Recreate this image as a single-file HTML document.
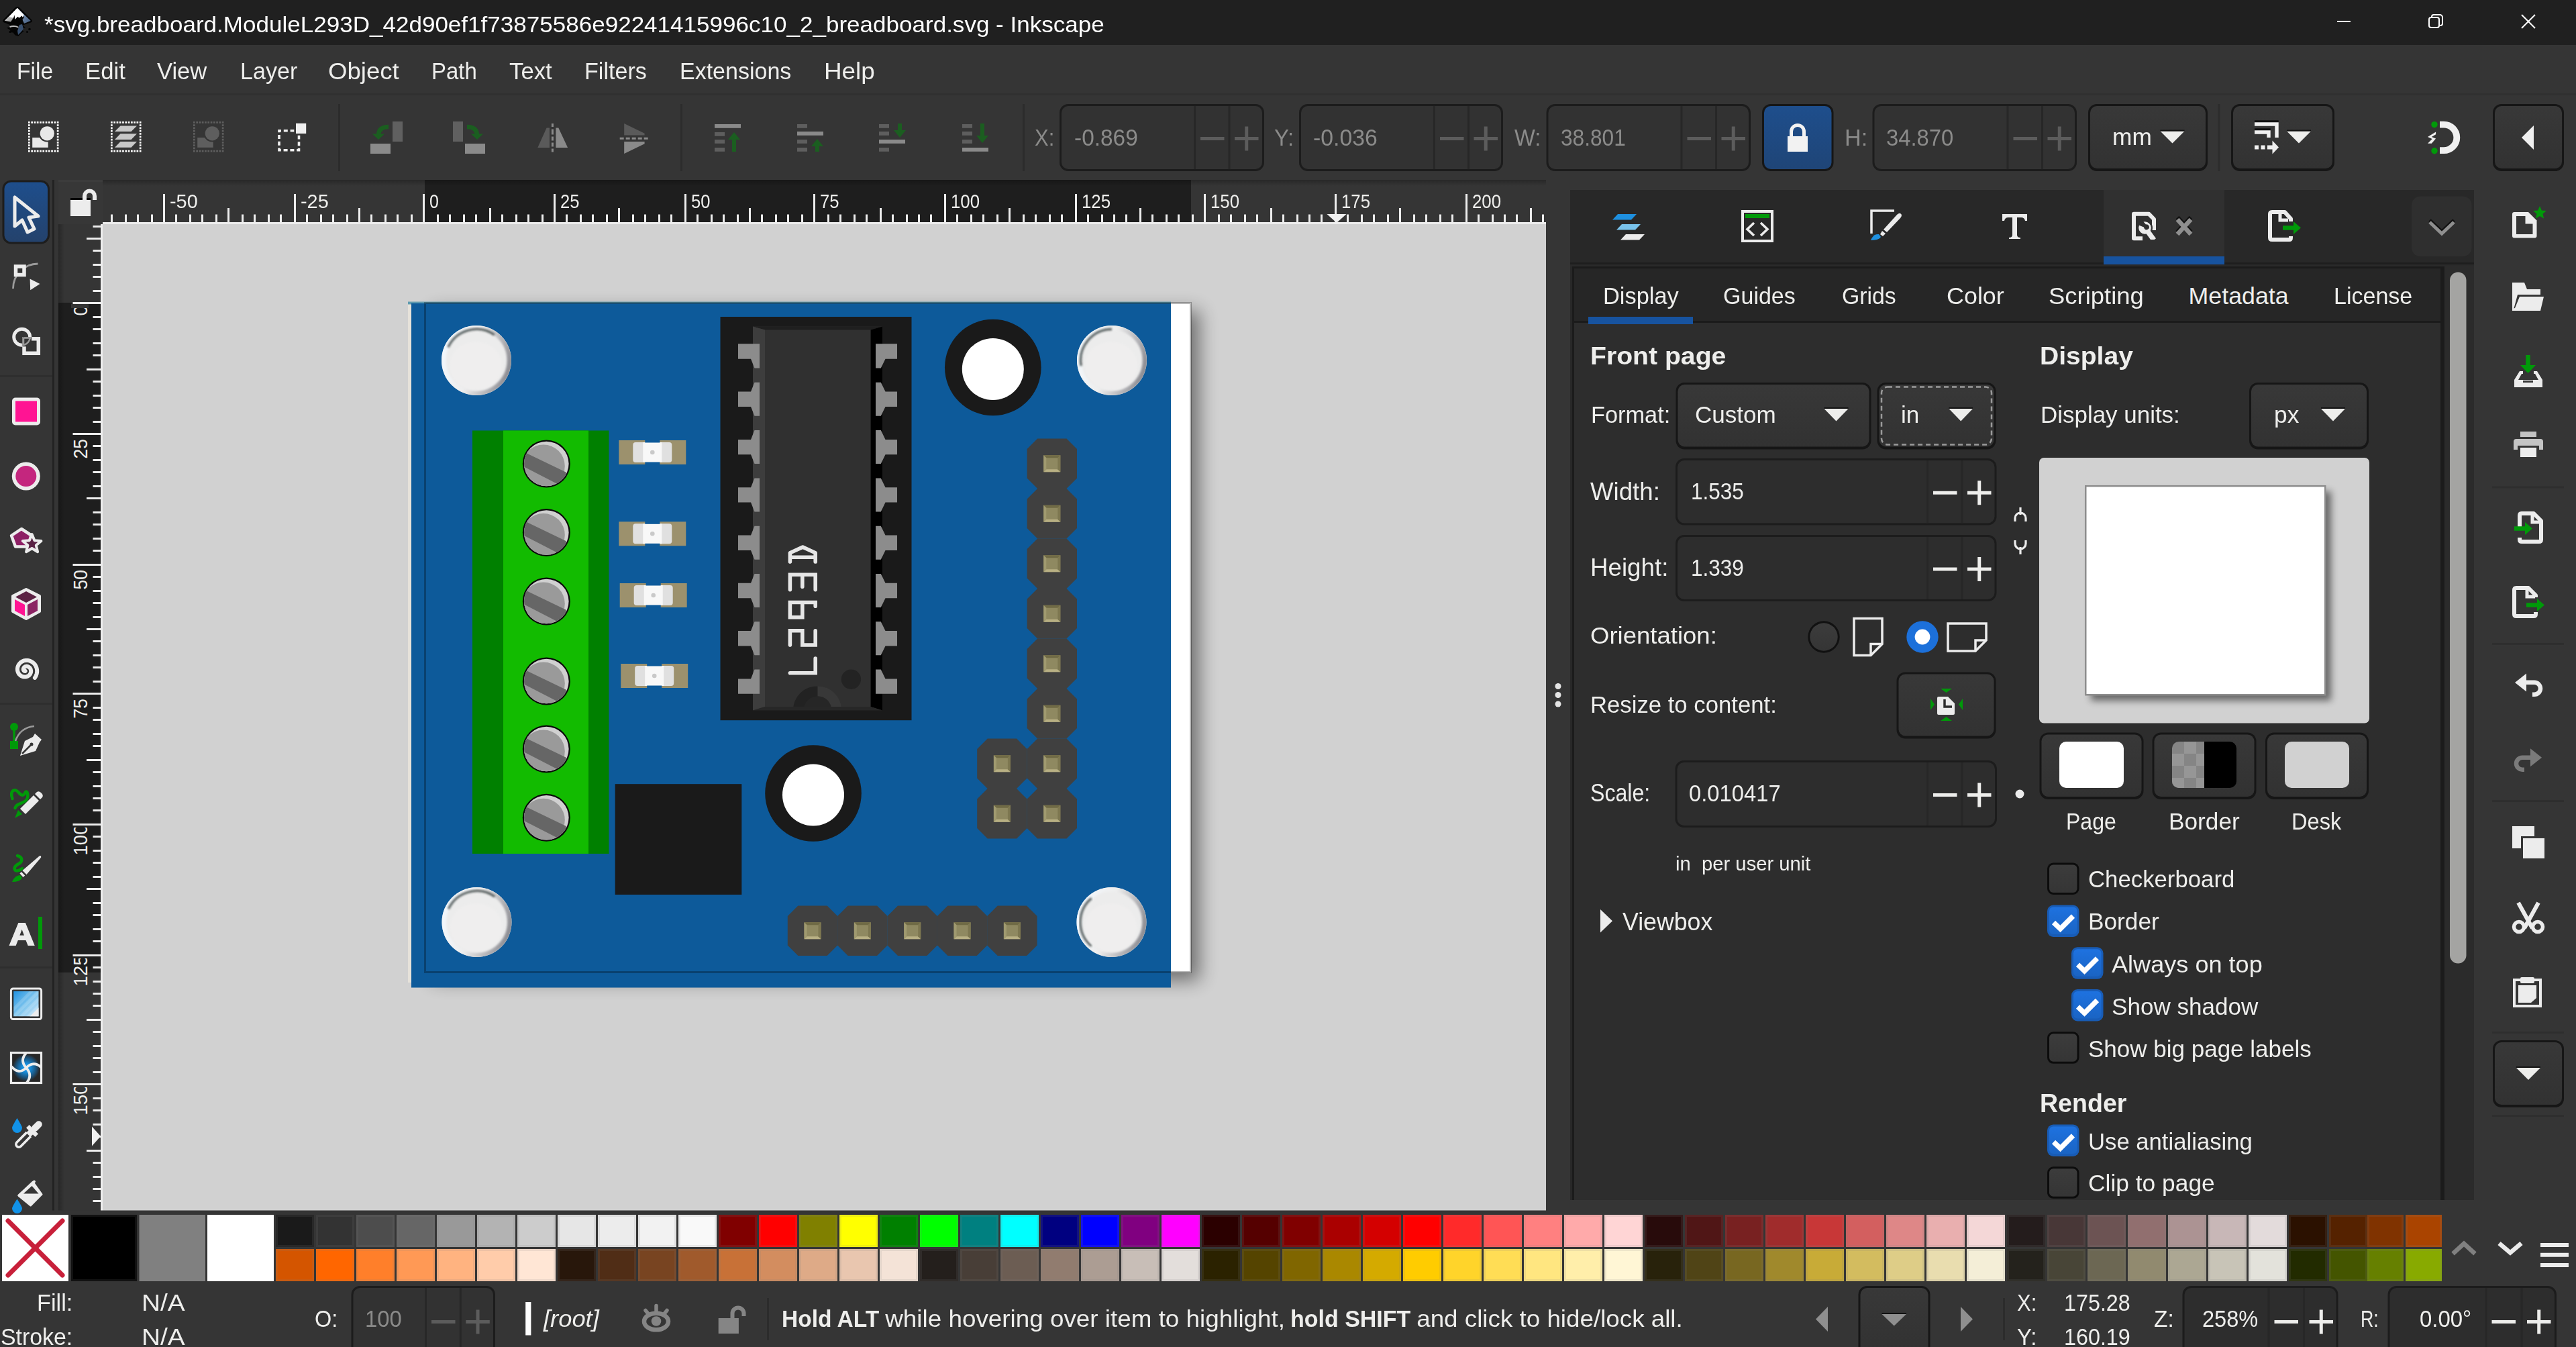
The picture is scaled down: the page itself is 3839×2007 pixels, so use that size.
<!DOCTYPE html>
<html><head><meta charset="utf-8"><title>Inkscape</title>
<style>
html,body{margin:0;padding:0;background:#353535;}
html{width:3839px;height:2007px;overflow:hidden;}
body{width:3839px;height:2007px;overflow:hidden;position:relative;font-family:"Liberation Sans",sans-serif;}
svg{position:absolute;left:0;top:0;}
.t{position:absolute;white-space:pre;display:block;}
</style></head><body>
<svg width="3839" height="2007" viewBox="0 0 3839 2007">
<rect x="0.0" y="0.0" width="3839.0" height="67.0" fill="#202020"/>
<linearGradient id="lgl" x1="0" y1="0" x2="1" y2="1"><stop offset="0" stop-color="#ffffff"/><stop offset="1" stop-color="#7a7a7a"/></linearGradient>
<linearGradient id="lgr" x1="0" y1="0" x2="1" y2="1"><stop offset="0" stop-color="#9fb4d0"/><stop offset="1" stop-color="#3e587c"/></linearGradient>
<path d="M25.8 10 Q27.6 10 29.2 11.6 L47 29.3 Q49.3 32 46 33.6 L33.5 37.8 L38 41 L31 44.3 L35.5 46.5 L30.5 50.5 L27.5 54 L22.5 52.5 L19.5 48.5 L13.5 48 L15.5 45 L10 41.5 L21 39.5 L6 33.6 Q2.8 32 5 29.3 L22.4 11.6 Q24 10 25.8 10 Z" fill="#040404"/>
<path d="M25.8 12 L6.8 30.8 L16 32.6 L20.5 26 L23 16 Z" fill="url(#lgl)"/>
<path d="M25.8 12 L45.8 31 L36 35 L33.5 29.5 L36 25.5 L34 22 Z" fill="url(#lgr)"/>
<path d="M25.8 11.8 L13.5 25 L19.5 26.8 L21.5 22.5 L22.5 29 L26 25 L29 26.5 L32.5 23.5 L34 26 L35.5 22 Z" fill="#ffffff"/>
<path d="M14 39.5 Q21 36.5 28 40 L27 41.5 Q21 39 15 41 Z" fill="#bdbdbd"/>
<path d="M29 37 L33 36 L35 43 L31 48 L27 52 L26 46 Z" fill="#39506f"/>
<circle cx="15" cy="47.5" r="1.6" fill="#040404"/><circle cx="40.5" cy="47.5" r="1.5" fill="#040404"/><circle cx="44" cy="43.5" r="1.8" fill="#040404"/>
<path d="M3483 32 h20" stroke="#fff" stroke-width="2" fill="none"/>
<rect x="3620" y="26" width="15" height="15" rx="3" fill="none" stroke="#fff" stroke-width="2"/>
<path d="M3624 26 v-1 a3 3 0 0 1 3 -3 h9 a4 4 0 0 1 4 4 v9 a3 3 0 0 1 -3 3 h-1" fill="none" stroke="#fff" stroke-width="2"/>
<path d="M3758 22 l20 20 M3778 22 l-20 20" stroke="#fff" stroke-width="2" fill="none"/>
<rect x="0.0" y="67.0" width="3839.0" height="72.0" fill="#353535"/>
<rect x="0.0" y="139.0" width="3839.0" height="3.0" fill="#303030"/>
<path d="M42.0 181 h2.7 v2.7 h-2.7z M42.0 223.8 h2.7 v2.7 h-2.7z M46.3 181 h2.7 v2.7 h-2.7z M46.3 223.8 h2.7 v2.7 h-2.7z M42 185.3 h2.7 v2.7 h-2.7z M84.8 185.3 h2.7 v2.7 h-2.7z M50.6 181 h2.7 v2.7 h-2.7z M50.6 223.8 h2.7 v2.7 h-2.7z M42 189.6 h2.7 v2.7 h-2.7z M84.8 189.6 h2.7 v2.7 h-2.7z M54.8 181 h2.7 v2.7 h-2.7z M54.8 223.8 h2.7 v2.7 h-2.7z M42 193.8 h2.7 v2.7 h-2.7z M84.8 193.8 h2.7 v2.7 h-2.7z M59.1 181 h2.7 v2.7 h-2.7z M59.1 223.8 h2.7 v2.7 h-2.7z M42 198.1 h2.7 v2.7 h-2.7z M84.8 198.1 h2.7 v2.7 h-2.7z M63.4 181 h2.7 v2.7 h-2.7z M63.4 223.8 h2.7 v2.7 h-2.7z M42 202.4 h2.7 v2.7 h-2.7z M84.8 202.4 h2.7 v2.7 h-2.7z M67.7 181 h2.7 v2.7 h-2.7z M67.7 223.8 h2.7 v2.7 h-2.7z M42 206.7 h2.7 v2.7 h-2.7z M84.8 206.7 h2.7 v2.7 h-2.7z M72.0 181 h2.7 v2.7 h-2.7z M72.0 223.8 h2.7 v2.7 h-2.7z M42 211.0 h2.7 v2.7 h-2.7z M84.8 211.0 h2.7 v2.7 h-2.7z M76.2 181 h2.7 v2.7 h-2.7z M76.2 223.8 h2.7 v2.7 h-2.7z M42 215.2 h2.7 v2.7 h-2.7z M84.8 215.2 h2.7 v2.7 h-2.7z M80.5 181 h2.7 v2.7 h-2.7z M80.5 223.8 h2.7 v2.7 h-2.7z M42 219.5 h2.7 v2.7 h-2.7z M84.8 219.5 h2.7 v2.7 h-2.7z M84.8 181 h2.7 v2.7 h-2.7z M84.8 223.8 h2.7 v2.7 h-2.7z" fill="#ffffff"/>
<rect x="48.2" y="205" width="23.5" height="14.8" fill="#e8e8e8"/><circle cx="70.3" cy="198.8" r="12.8" fill="#353535"/><circle cx="70.3" cy="198.8" r="10.6" fill="#e8e8e8"/>
<path d="M165.0 181 h2.7 v2.7 h-2.7z M165.0 223.8 h2.7 v2.7 h-2.7z M169.3 181 h2.7 v2.7 h-2.7z M169.3 223.8 h2.7 v2.7 h-2.7z M165 185.3 h2.7 v2.7 h-2.7z M207.8 185.3 h2.7 v2.7 h-2.7z M173.6 181 h2.7 v2.7 h-2.7z M173.6 223.8 h2.7 v2.7 h-2.7z M165 189.6 h2.7 v2.7 h-2.7z M207.8 189.6 h2.7 v2.7 h-2.7z M177.8 181 h2.7 v2.7 h-2.7z M177.8 223.8 h2.7 v2.7 h-2.7z M165 193.8 h2.7 v2.7 h-2.7z M207.8 193.8 h2.7 v2.7 h-2.7z M182.1 181 h2.7 v2.7 h-2.7z M182.1 223.8 h2.7 v2.7 h-2.7z M165 198.1 h2.7 v2.7 h-2.7z M207.8 198.1 h2.7 v2.7 h-2.7z M186.4 181 h2.7 v2.7 h-2.7z M186.4 223.8 h2.7 v2.7 h-2.7z M165 202.4 h2.7 v2.7 h-2.7z M207.8 202.4 h2.7 v2.7 h-2.7z M190.7 181 h2.7 v2.7 h-2.7z M190.7 223.8 h2.7 v2.7 h-2.7z M165 206.7 h2.7 v2.7 h-2.7z M207.8 206.7 h2.7 v2.7 h-2.7z M195.0 181 h2.7 v2.7 h-2.7z M195.0 223.8 h2.7 v2.7 h-2.7z M165 211.0 h2.7 v2.7 h-2.7z M207.8 211.0 h2.7 v2.7 h-2.7z M199.2 181 h2.7 v2.7 h-2.7z M199.2 223.8 h2.7 v2.7 h-2.7z M165 215.2 h2.7 v2.7 h-2.7z M207.8 215.2 h2.7 v2.7 h-2.7z M203.5 181 h2.7 v2.7 h-2.7z M203.5 223.8 h2.7 v2.7 h-2.7z M165 219.5 h2.7 v2.7 h-2.7z M207.8 219.5 h2.7 v2.7 h-2.7z M207.8 181 h2.7 v2.7 h-2.7z M207.8 223.8 h2.7 v2.7 h-2.7z" fill="#ffffff"/>
<path d="M179.5 187.5 h24.5 l-8.5 8.6 h-24.5 z" fill="#c8c8c8"/>
<path d="M179.5 199.3 h24.5 l-8.5 8.6 h-24.5 z" fill="#c8c8c8"/>
<path d="M179.5 211.1 h24.5 l-8.5 8.6 h-24.5 z" fill="#c8c8c8"/>
<path d="M288.0 181 h2.7 v2.7 h-2.7z M288.0 223.8 h2.7 v2.7 h-2.7z M292.3 181 h2.7 v2.7 h-2.7z M292.3 223.8 h2.7 v2.7 h-2.7z M288 185.3 h2.7 v2.7 h-2.7z M330.8 185.3 h2.7 v2.7 h-2.7z M296.6 181 h2.7 v2.7 h-2.7z M296.6 223.8 h2.7 v2.7 h-2.7z M288 189.6 h2.7 v2.7 h-2.7z M330.8 189.6 h2.7 v2.7 h-2.7z M300.8 181 h2.7 v2.7 h-2.7z M300.8 223.8 h2.7 v2.7 h-2.7z M288 193.8 h2.7 v2.7 h-2.7z M330.8 193.8 h2.7 v2.7 h-2.7z M305.1 181 h2.7 v2.7 h-2.7z M305.1 223.8 h2.7 v2.7 h-2.7z M288 198.1 h2.7 v2.7 h-2.7z M330.8 198.1 h2.7 v2.7 h-2.7z M309.4 181 h2.7 v2.7 h-2.7z M309.4 223.8 h2.7 v2.7 h-2.7z M288 202.4 h2.7 v2.7 h-2.7z M330.8 202.4 h2.7 v2.7 h-2.7z M313.7 181 h2.7 v2.7 h-2.7z M313.7 223.8 h2.7 v2.7 h-2.7z M288 206.7 h2.7 v2.7 h-2.7z M330.8 206.7 h2.7 v2.7 h-2.7z M318.0 181 h2.7 v2.7 h-2.7z M318.0 223.8 h2.7 v2.7 h-2.7z M288 211.0 h2.7 v2.7 h-2.7z M330.8 211.0 h2.7 v2.7 h-2.7z M322.2 181 h2.7 v2.7 h-2.7z M322.2 223.8 h2.7 v2.7 h-2.7z M288 215.2 h2.7 v2.7 h-2.7z M330.8 215.2 h2.7 v2.7 h-2.7z M326.5 181 h2.7 v2.7 h-2.7z M326.5 223.8 h2.7 v2.7 h-2.7z M288 219.5 h2.7 v2.7 h-2.7z M330.8 219.5 h2.7 v2.7 h-2.7z M330.8 181 h2.7 v2.7 h-2.7z M330.8 223.8 h2.7 v2.7 h-2.7z" fill="#5e5e5e"/>
<rect x="294.2" y="205" width="23.5" height="14.8" fill="#5e5e5e"/><circle cx="316.3" cy="198.8" r="12.8" fill="#353535"/><circle cx="316.3" cy="198.8" r="10.6" fill="#5e5e5e"/>
<rect x="416" y="194.8" width="29.5" height="29" fill="none" stroke="#f0f0f0" stroke-width="3.6" stroke-dasharray="6 3.8" stroke-dashoffset="3"/>
<rect x="438.5" y="181.5" width="20" height="20" fill="#353535"/><rect x="441" y="183.8" width="15.2" height="15.2" fill="#f0f0f0"/>
<path d="M505.5 155 V255" stroke="#2c2c2c" stroke-width="3"/>
<rect x="585" y="181" width="15" height="30" fill="#606060"/><rect x="552" y="214" width="30" height="15" fill="#8a8a8a"/>
<path d="M579 189 Q564.5 189 564 201" fill="none" stroke="#1b5e20" stroke-width="6.5"/><path d="M554.9 199.5 h18.2 l-9.1 8.5 z" fill="#1b5e20"/>
<rect x="675" y="181" width="15" height="30" fill="#606060"/><rect x="693" y="214" width="30" height="15" fill="#8a8a8a"/>
<path d="M696 189 Q710.5 189 711 201" fill="none" stroke="#1b5e20" stroke-width="6.5"/><path d="M701.9 199.5 h18.2 l-9.1 8.5 z" fill="#1b5e20"/>
<path d="M801.3 220 H819 V190.4 H814.6 Z" fill="#5a5a5a"/><path d="M828.4 190.4 H832.3 L846.1 220 H828.4 Z" fill="#8a8a8a"/><path d="M823.4 184 V226.5" stroke="#8a8a8a" stroke-width="3" stroke-dasharray="5 3.5 8 3 6 3 6 3 6"/>
<path d="M930.2 184 L960.6 198.7 V201.6 H930.2 Z" fill="#5a5a5a"/><path d="M930.2 211 H960.6 V214.3 L930.2 229 Z" fill="#8a8a8a"/><path d="M923.7 206.2 H966.5" stroke="#8a8a8a" stroke-width="3" stroke-dasharray="6 3"/>
<path d="M1015.5 155 V255" stroke="#2c2c2c" stroke-width="3"/>
<rect x="1065" y="185" width="39" height="5.8" fill="#8a8a8a"/>
<rect x="1065" y="197" width="15" height="5.8" fill="#5e5e5e"/>
<rect x="1065" y="208" width="15" height="5.8" fill="#5e5e5e"/>
<rect x="1065" y="220" width="15" height="5.8" fill="#5e5e5e"/>
<path d="M1094 226 V206" stroke="#1b5e20" stroke-width="6"/><path d="M1085 208 h18 l-9 -11 z" fill="#1b5e20"/>
<rect x="1188" y="185" width="15" height="5.8" fill="#5e5e5e"/>
<rect x="1188" y="196" width="39" height="5.8" fill="#8a8a8a"/>
<rect x="1188" y="208" width="15" height="5.8" fill="#5e5e5e"/>
<rect x="1188" y="220" width="15" height="5.8" fill="#5e5e5e"/>
<path d="M1218 226 V216" stroke="#1b5e20" stroke-width="6"/><path d="M1209 218 h18 l-9 -11 z" fill="#1b5e20"/>
<rect x="1310" y="185" width="15" height="5.8" fill="#5e5e5e"/>
<rect x="1310" y="196" width="15" height="5.8" fill="#5e5e5e"/>
<rect x="1310" y="208" width="39" height="5.8" fill="#8a8a8a"/>
<rect x="1310" y="220" width="15" height="5.8" fill="#5e5e5e"/>
<path d="M1341 184 V196" stroke="#1b5e20" stroke-width="6"/><path d="M1332 194 h18 l-9 11 z" fill="#1b5e20"/>
<rect x="1434" y="185" width="15" height="5.8" fill="#5e5e5e"/>
<rect x="1434" y="196" width="15" height="5.8" fill="#5e5e5e"/>
<rect x="1434" y="208" width="15" height="5.8" fill="#5e5e5e"/>
<rect x="1434" y="220" width="39" height="5.8" fill="#8a8a8a"/>
<path d="M1464 184 V204" stroke="#1b5e20" stroke-width="6"/><path d="M1455 202 h18 l-9 11 z" fill="#1b5e20"/>
<path d="M1525.5 155 V255" stroke="#2c2c2c" stroke-width="3"/>
<rect x="1579.0" y="155.0" width="305.0" height="100.0" fill="#1c1c1c" rx="13"/>
<rect x="1582.0" y="158.0" width="299.0" height="94.0" fill="#323232" rx="10"/>
<path d="M1780.5 158 V252 M1832 158 V252" stroke="#272727" stroke-width="3"/>
<path d="M1789.0 206.5 h35.5" stroke="#5c5c5c" stroke-width="5.0"/>
<path d="M1840 206.5 h35.5 M1857.75 188.5 v36" stroke="#5c5c5c" stroke-width="5.0"/>
<rect x="1936.0" y="155.0" width="304.0" height="100.0" fill="#1c1c1c" rx="13"/>
<rect x="1939.0" y="158.0" width="298.0" height="94.0" fill="#323232" rx="10"/>
<path d="M2137.5 158 V252 M2188.5 158 V252" stroke="#272727" stroke-width="3"/>
<path d="M2146.0 206.5 h35.5" stroke="#5c5c5c" stroke-width="5.0"/>
<path d="M2196.5 206.5 h35.5 M2214.25 188.5 v36" stroke="#5c5c5c" stroke-width="5.0"/>
<rect x="2304.5" y="155.0" width="304.5" height="100.0" fill="#1c1c1c" rx="13"/>
<rect x="2307.5" y="158.0" width="298.5" height="94.0" fill="#323232" rx="10"/>
<path d="M2506 158 V252 M2557.5 158 V252" stroke="#272727" stroke-width="3"/>
<path d="M2514.5 206.5 h35.5" stroke="#5c5c5c" stroke-width="5.0"/>
<path d="M2565.5 206.5 h35.5 M2583.25 188.5 v36" stroke="#5c5c5c" stroke-width="5.0"/>
<linearGradient id="lockg" x1="0" y1="0" x2="0" y2="1"><stop offset="0" stop-color="#1e4e8c"/><stop offset="1" stop-color="#1f4577"/></linearGradient>
<rect x="2626.0" y="155.0" width="106.5" height="100.0" fill="#161616" rx="13"/>
<rect x="2629.0" y="158.0" width="100.5" height="94.0" fill="url(#lockg)" rx="10"/>
<rect x="2664" y="203" width="30" height="23" fill="#f2f2f2"/><path d="M2669.5 204 v-8 a9.5 9.5 0 0 1 19 0 v8" fill="none" stroke="#f2f2f2" stroke-width="5"/>
<rect x="2790.5" y="155.0" width="304.5" height="100.0" fill="#1c1c1c" rx="13"/>
<rect x="2793.5" y="158.0" width="298.5" height="94.0" fill="#323232" rx="10"/>
<path d="M2992 158 V252 M3043.5 158 V252" stroke="#272727" stroke-width="3"/>
<path d="M3000.5 206.5 h35.5" stroke="#5c5c5c" stroke-width="5.0"/>
<path d="M3051.5 206.5 h35.5 M3069.25 188.5 v36" stroke="#5c5c5c" stroke-width="5.0"/>
<linearGradient id="bg3112_155" x1="0" y1="0" x2="0" y2="1"><stop offset="0" stop-color="#383838"/><stop offset="1" stop-color="#323232"/></linearGradient>
<rect x="3112.0" y="155.0" width="178.0" height="100.0" fill="#161616" rx="13"/>
<rect x="3115.0" y="158.0" width="172.0" height="93.0" fill="url(#bg3112_155)" rx="10"/>
<path d="M3219.5 195.5 H3255.5 L3237.5 213.5 Z" fill="#eeeeec"/>
<path d="M3219.5 194.5 H3255.5" stroke="#111" stroke-width="2"/>
<path d="M3307 155 V255" stroke="#2c2c2c" stroke-width="3"/>
<linearGradient id="bg3325_155" x1="0" y1="0" x2="0" y2="1"><stop offset="0" stop-color="#383838"/><stop offset="1" stop-color="#323232"/></linearGradient>
<rect x="3325.0" y="155.0" width="154.0" height="100.0" fill="#161616" rx="13"/>
<rect x="3328.0" y="158.0" width="148.0" height="93.0" fill="url(#bg3325_155)" rx="10"/>
<path d="M3360 182 h33 v23 M3360 194 h21 v11" fill="none" stroke="#111" stroke-width="5.5"/>
<path d="M3360 185 h33 v20 M3360 197 h21 v8" fill="none" stroke="#f0f0f0" stroke-width="5.5"/>
<path d="M3360 219.5 h6 m3.5 0 h6 m3.5 0 h8" stroke="#f0f0f0" stroke-width="6"/><path d="M3386.5 209.5 l9.5 10 l-9.5 10 z" fill="#f0f0f0"/>
<path d="M3408 195.5 H3444 L3426.0 213.5 Z" fill="#eeeeec"/>
<path d="M3408 194.5 H3444" stroke="#111" stroke-width="2"/>
<path d="M3636 185.6 h6 a19.3 19.3 0 0 1 0 38.6 h-6" fill="none" stroke="#f0f0f0" stroke-width="9.8"/>
<circle cx="3628" cy="185.6" r="4.7" fill="#009909"/><circle cx="3628" cy="224.7" r="4.7" fill="#009909"/>
<path d="M3630.1 196.4 L3618 204 L3624.7 206.9 L3618 213.8 H3623.8 L3630.1 206.5 L3623.8 204 L3630.1 200.2 Z" fill="#f0f0f0"/>
<linearGradient id="bg3715_155" x1="0" y1="0" x2="0" y2="1"><stop offset="0" stop-color="#383838"/><stop offset="1" stop-color="#323232"/></linearGradient>
<rect x="3715.0" y="155.0" width="106.0" height="100.0" fill="#161616" rx="13"/>
<rect x="3718.0" y="158.0" width="100.0" height="93.0" fill="url(#bg3715_155)" rx="10"/>
<path d="M3776 187 v36 l-18 -18 z" fill="#f0f0f0"/>
<rect x="153.0" y="334.0" width="2151.0" height="1469.5" fill="#d1d1d1"/>
<rect x="153.0" y="268.0" width="2151.0" height="66.0" fill="#353535"/>
<rect x="633.0" y="268.0" width="1142.0" height="63.0" fill="#1e1e1e"/>
<linearGradient id="rsh" x1="0" y1="0" x2="0" y2="1"><stop offset="0" stop-color="#000" stop-opacity="0.25"/><stop offset="1" stop-color="#000" stop-opacity="0"/></linearGradient>
<rect x="153.0" y="268.0" width="2151.0" height="9.0" fill="url(#rsh)"/>
<rect x="87.0" y="334.0" width="66.0" height="1469.5" fill="#353535"/>
<rect x="87.0" y="451.0" width="63.0" height="998.0" fill="#1e1e1e"/>
<linearGradient id="rsv" x1="0" y1="0" x2="1" y2="0"><stop offset="0" stop-color="#000" stop-opacity="0.25"/><stop offset="1" stop-color="#000" stop-opacity="0"/></linearGradient>
<rect x="87.0" y="334.0" width="9.0" height="1469.5" fill="url(#rsv)"/>
<rect x="153.0" y="331.0" width="2151.0" height="3.0" fill="#ededed"/>
<rect x="150.0" y="334.0" width="3.0" height="1469.5" fill="#ededed"/>
<rect x="87.0" y="268.0" width="66.0" height="66.0" fill="#373737"/>
<rect x="87.0" y="268.0" width="66.0" height="3.0" fill="#3c3c3c"/>
<rect x="105" y="295" width="30" height="24" fill="#000"/><path d="M126 298 v-6 a7.5 7.5 0 0 1 15 0 v3" fill="none" stroke="#000" stroke-width="6"/>
<rect x="105" y="298" width="30" height="24" fill="#ececec"/><path d="M126 300 v-8 a7.5 7.5 0 0 1 15 0 v6" fill="none" stroke="#ececec" stroke-width="6"/>
<path d="M165 319.5 h3 V331 h-3 z M186 319.5 h3 V331 h-3 z M204 319.5 h3 V331 h-3 z M225 319.5 h3 V331 h-3 z M243 289 h3 V331 h-3 z M261 319.5 h3 V331 h-3 z M282 319.5 h3 V331 h-3 z M300 319.5 h3 V331 h-3 z M321 319.5 h3 V331 h-3 z M339 310 h3 V331 h-3 z M360 319.5 h3 V331 h-3 z M378 319.5 h3 V331 h-3 z M399 319.5 h3 V331 h-3 z M417 319.5 h3 V331 h-3 z M438 289 h3 V331 h-3 z M456 319.5 h3 V331 h-3 z M477 319.5 h3 V331 h-3 z M495 319.5 h3 V331 h-3 z M516 319.5 h3 V331 h-3 z M534 310 h3 V331 h-3 z M552 319.5 h3 V331 h-3 z M573 319.5 h3 V331 h-3 z M591 319.5 h3 V331 h-3 z M612 319.5 h3 V331 h-3 z M630 289 h3 V331 h-3 z M651 319.5 h3 V331 h-3 z M669 319.5 h3 V331 h-3 z M690 319.5 h3 V331 h-3 z M708 319.5 h3 V331 h-3 z M729 310 h3 V331 h-3 z M747 319.5 h3 V331 h-3 z M768 319.5 h3 V331 h-3 z M786 319.5 h3 V331 h-3 z M807 319.5 h3 V331 h-3 z M825 289 h3 V331 h-3 z M843 319.5 h3 V331 h-3 z M864 319.5 h3 V331 h-3 z M882 319.5 h3 V331 h-3 z M903 319.5 h3 V331 h-3 z M921 310 h3 V331 h-3 z M942 319.5 h3 V331 h-3 z M960 319.5 h3 V331 h-3 z M981 319.5 h3 V331 h-3 z M999 319.5 h3 V331 h-3 z M1020 289 h3 V331 h-3 z M1038 319.5 h3 V331 h-3 z M1059 319.5 h3 V331 h-3 z M1077 319.5 h3 V331 h-3 z M1098 319.5 h3 V331 h-3 z M1116 310 h3 V331 h-3 z M1134 319.5 h3 V331 h-3 z M1155 319.5 h3 V331 h-3 z M1173 319.5 h3 V331 h-3 z M1194 319.5 h3 V331 h-3 z M1212 289 h3 V331 h-3 z M1233 319.5 h3 V331 h-3 z M1251 319.5 h3 V331 h-3 z M1272 319.5 h3 V331 h-3 z M1290 319.5 h3 V331 h-3 z M1311 310 h3 V331 h-3 z M1329 319.5 h3 V331 h-3 z M1350 319.5 h3 V331 h-3 z M1368 319.5 h3 V331 h-3 z M1386 319.5 h3 V331 h-3 z M1407 289 h3 V331 h-3 z M1425 319.5 h3 V331 h-3 z M1446 319.5 h3 V331 h-3 z M1464 319.5 h3 V331 h-3 z M1485 319.5 h3 V331 h-3 z M1503 310 h3 V331 h-3 z M1524 319.5 h3 V331 h-3 z M1542 319.5 h3 V331 h-3 z M1563 319.5 h3 V331 h-3 z M1581 319.5 h3 V331 h-3 z M1602 289 h3 V331 h-3 z M1620 319.5 h3 V331 h-3 z M1641 319.5 h3 V331 h-3 z M1659 319.5 h3 V331 h-3 z M1677 319.5 h3 V331 h-3 z M1698 310 h3 V331 h-3 z M1716 319.5 h3 V331 h-3 z M1737 319.5 h3 V331 h-3 z M1755 319.5 h3 V331 h-3 z M1776 319.5 h3 V331 h-3 z M1794 289 h3 V331 h-3 z M1815 319.5 h3 V331 h-3 z M1833 319.5 h3 V331 h-3 z M1854 319.5 h3 V331 h-3 z M1872 319.5 h3 V331 h-3 z M1893 310 h3 V331 h-3 z M1911 319.5 h3 V331 h-3 z M1932 319.5 h3 V331 h-3 z M1950 319.5 h3 V331 h-3 z M1968 319.5 h3 V331 h-3 z M1989 289 h3 V331 h-3 z M2007 319.5 h3 V331 h-3 z M2028 319.5 h3 V331 h-3 z M2046 319.5 h3 V331 h-3 z M2067 319.5 h3 V331 h-3 z M2085 310 h3 V331 h-3 z M2106 319.5 h3 V331 h-3 z M2124 319.5 h3 V331 h-3 z M2145 319.5 h3 V331 h-3 z M2163 319.5 h3 V331 h-3 z M2184 289 h3 V331 h-3 z M2202 319.5 h3 V331 h-3 z M2223 319.5 h3 V331 h-3 z M2241 319.5 h3 V331 h-3 z M2259 319.5 h3 V331 h-3 z M2280 310 h3 V331 h-3 z M2298 319.5 h3 V331 h-3 z" fill="#ededed"/>
<path d="M138.5 336 H150 v3 H138.5 z M129 354 H150 v3 H129 z M138.5 372 H150 v3 H138.5 z M138.5 393 H150 v3 H138.5 z M138.5 411 H150 v3 H138.5 z M138.5 432 H150 v3 H138.5 z M108.5 450 H150 v3 H108.5 z M138.5 471 H150 v3 H138.5 z M138.5 489 H150 v3 H138.5 z M138.5 510 H150 v3 H138.5 z M138.5 528 H150 v3 H138.5 z M129 549 H150 v3 H129 z M138.5 567 H150 v3 H138.5 z M138.5 588 H150 v3 H138.5 z M138.5 606 H150 v3 H138.5 z M138.5 627 H150 v3 H138.5 z M108.5 645 H150 v3 H108.5 z M138.5 663 H150 v3 H138.5 z M138.5 684 H150 v3 H138.5 z M138.5 702 H150 v3 H138.5 z M138.5 723 H150 v3 H138.5 z M129 741 H150 v3 H129 z M138.5 762 H150 v3 H138.5 z M138.5 780 H150 v3 H138.5 z M138.5 801 H150 v3 H138.5 z M138.5 819 H150 v3 H138.5 z M108.5 840 H150 v3 H108.5 z M138.5 858 H150 v3 H138.5 z M138.5 879 H150 v3 H138.5 z M138.5 897 H150 v3 H138.5 z M138.5 918 H150 v3 H138.5 z M129 936 H150 v3 H129 z M138.5 954 H150 v3 H138.5 z M138.5 975 H150 v3 H138.5 z M138.5 993 H150 v3 H138.5 z M138.5 1014 H150 v3 H138.5 z M108.5 1032 H150 v3 H108.5 z M138.5 1053 H150 v3 H138.5 z M138.5 1071 H150 v3 H138.5 z M138.5 1092 H150 v3 H138.5 z M138.5 1110 H150 v3 H138.5 z M129 1131 H150 v3 H129 z M138.5 1149 H150 v3 H138.5 z M138.5 1170 H150 v3 H138.5 z M138.5 1188 H150 v3 H138.5 z M138.5 1206 H150 v3 H138.5 z M108.5 1227 H150 v3 H108.5 z M138.5 1245 H150 v3 H138.5 z M138.5 1266 H150 v3 H138.5 z M138.5 1284 H150 v3 H138.5 z M138.5 1305 H150 v3 H138.5 z M129 1323 H150 v3 H129 z M138.5 1344 H150 v3 H138.5 z M138.5 1362 H150 v3 H138.5 z M138.5 1383 H150 v3 H138.5 z M138.5 1401 H150 v3 H138.5 z M108.5 1422 H150 v3 H108.5 z M138.5 1440 H150 v3 H138.5 z M138.5 1461 H150 v3 H138.5 z M138.5 1479 H150 v3 H138.5 z M138.5 1497 H150 v3 H138.5 z M129 1518 H150 v3 H129 z M138.5 1536 H150 v3 H138.5 z M138.5 1557 H150 v3 H138.5 z M138.5 1575 H150 v3 H138.5 z M138.5 1596 H150 v3 H138.5 z M108.5 1614 H150 v3 H108.5 z M138.5 1635 H150 v3 H138.5 z M138.5 1653 H150 v3 H138.5 z M138.5 1674 H150 v3 H138.5 z M138.5 1692 H150 v3 H138.5 z M129 1713 H150 v3 H129 z M138.5 1731 H150 v3 H138.5 z M138.5 1752 H150 v3 H138.5 z M138.5 1770 H150 v3 H138.5 z M138.5 1788 H150 v3 H138.5 z" fill="#ededed"/>
<path d="M1977.5 319 h29 l-14.5 13 z" fill="#f0f0f0"/>
<path d="M137 1678.5 v29 l13 -14.5 z" fill="#f0f0f0"/>
<rect x="78.0" y="268.0" width="3.0" height="1535.5" fill="#222222"/>
<defs><filter id="pgsh" x="-10%" y="-10%" width="130%" height="130%"><feGaussianBlur stdDeviation="9"/></filter><filter id="blur2"><feGaussianBlur stdDeviation="1.6"/></filter><clipPath id="cvclip"><rect x="153" y="334" width="2151" height="1469.5"/></clipPath></defs>
<g clip-path="url(#cvclip)">
<filter id="pgsh2" x="-10%" y="-10%" width="130%" height="130%"><feGaussianBlur stdDeviation="14"/></filter>
<rect x="645" y="463" width="1142" height="998" fill="#000" opacity="0.47" filter="url(#pgsh2)"/>
<rect x="633.0" y="451.0" width="1142.0" height="998.0" fill="#ffffff"/>
<rect x="608.0" y="450.0" width="8.0" height="1014.0" fill="#e6e2da"/>
<rect x="608.0" y="449.5" width="1137.0" height="4.0" fill="#5f9bb0"/>
<rect x="613.0" y="452.0" width="1132.0" height="1019.5" fill="#0d5a9a"/>
<linearGradient id="hrim" x1="0" y1="0.3" x2="1" y2="0.6"><stop offset="0" stop-color="#f2f7fc"/><stop offset="0.45" stop-color="#eeeeee"/><stop offset="1" stop-color="#8e8e94"/></linearGradient>
<clipPath id="hc710_537"><circle cx="710" cy="537" r="52"/></clipPath>
<circle cx="710" cy="537" r="52" fill="#ececec"/>
<g clip-path="url(#hc710_537)">
<circle cx="710" cy="537" r="49.5" fill="none" stroke="url(#hrim)" stroke-width="8" filter="url(#blur2)"/>
<path d="M667.9 517.3 A46.5 46.5 0 0 1 736.7 498.9" fill="none" stroke="#1c2826" stroke-width="3.4" opacity="0.7" filter="url(#blur2)"/>
<ellipse cx="709" cy="545" rx="39" ry="36" fill="#efeeee" filter="url(#blur2)"/>
</g>
<clipPath id="hc1657_537"><circle cx="1657" cy="537" r="52"/></clipPath>
<circle cx="1657" cy="537" r="52" fill="#ececec"/>
<g clip-path="url(#hc1657_537)">
<circle cx="1657" cy="537" r="49.5" fill="none" stroke="url(#hrim)" stroke-width="8" filter="url(#blur2)"/>
<path d="M1611.2 545.1 A46.5 46.5 0 0 1 1657.0 490.5" fill="none" stroke="#1c2826" stroke-width="3.4" opacity="0.7" filter="url(#blur2)"/>
<ellipse cx="1656" cy="545" rx="39" ry="36" fill="#efeeee" filter="url(#blur2)"/>
</g>
<clipPath id="hc710_1374"><circle cx="710.5" cy="1374" r="52"/></clipPath>
<circle cx="710.5" cy="1374" r="52" fill="#ececec"/>
<g clip-path="url(#hc710_1374)">
<circle cx="710.5" cy="1374" r="49.5" fill="none" stroke="url(#hrim)" stroke-width="8" filter="url(#blur2)"/>
<path d="M668.4 1354.3 A46.5 46.5 0 0 1 737.2 1335.9" fill="none" stroke="#1c2826" stroke-width="3.4" opacity="0.7" filter="url(#blur2)"/>
<ellipse cx="709.5" cy="1382" rx="39" ry="36" fill="#efeeee" filter="url(#blur2)"/>
</g>
<clipPath id="hc1656_1374"><circle cx="1656.5" cy="1374" r="52"/></clipPath>
<circle cx="1656.5" cy="1374" r="52" fill="#ececec"/>
<g clip-path="url(#hc1656_1374)">
<circle cx="1656.5" cy="1374" r="49.5" fill="none" stroke="url(#hrim)" stroke-width="8" filter="url(#blur2)"/>
<path d="M1626.6 1409.6 A46.5 46.5 0 0 1 1626.6 1338.4" fill="none" stroke="#1c2826" stroke-width="3.4" opacity="0.7" filter="url(#blur2)"/>
<ellipse cx="1655.5" cy="1382" rx="39" ry="36" fill="#efeeee" filter="url(#blur2)"/>
</g>
<rect x="704.0" y="641.5" width="203.5" height="630.5" fill="#008000"/>
<rect x="750.0" y="641.5" width="127.0" height="630.5" fill="#12bb00"/>
<circle cx="814.3" cy="691" r="35.5" fill="#0a0a0a"/>
<clipPath id="sc691"><circle cx="814.3" cy="691" r="33.3"/></clipPath>
<g clip-path="url(#sc691)">
<circle cx="814.3" cy="691" r="35.5" fill="#d0d0d0"/>
<circle cx="809.8" cy="694.5" r="32.0" fill="#9a9a9a"/>
<path d="M774.8 670.41 L843.8 703.78 L839.8 725.78 L774.8 692.41 Z" fill="#666666"/>
</g>
<circle cx="814.3" cy="793.5" r="35.5" fill="#0a0a0a"/>
<clipPath id="sc793"><circle cx="814.3" cy="793.5" r="33.3"/></clipPath>
<g clip-path="url(#sc793)">
<circle cx="814.3" cy="793.5" r="35.5" fill="#d0d0d0"/>
<circle cx="809.8" cy="797.0" r="32.0" fill="#9a9a9a"/>
<path d="M774.8 772.91 L843.8 806.28 L839.8 828.28 L774.8 794.91 Z" fill="#666666"/>
</g>
<circle cx="814.3" cy="896" r="35.5" fill="#0a0a0a"/>
<clipPath id="sc896"><circle cx="814.3" cy="896" r="33.3"/></clipPath>
<g clip-path="url(#sc896)">
<circle cx="814.3" cy="896" r="35.5" fill="#d0d0d0"/>
<circle cx="809.8" cy="899.5" r="32.0" fill="#9a9a9a"/>
<path d="M774.8 875.41 L843.8 908.78 L839.8 930.78 L774.8 897.41 Z" fill="#666666"/>
</g>
<circle cx="814.3" cy="1015" r="35.5" fill="#0a0a0a"/>
<clipPath id="sc1015"><circle cx="814.3" cy="1015" r="33.3"/></clipPath>
<g clip-path="url(#sc1015)">
<circle cx="814.3" cy="1015" r="35.5" fill="#d0d0d0"/>
<circle cx="809.8" cy="1018.5" r="32.0" fill="#9a9a9a"/>
<path d="M774.8 994.41 L843.8 1027.78 L839.8 1049.78 L774.8 1016.41 Z" fill="#666666"/>
</g>
<circle cx="814.3" cy="1116" r="35.5" fill="#0a0a0a"/>
<clipPath id="sc1116"><circle cx="814.3" cy="1116" r="33.3"/></clipPath>
<g clip-path="url(#sc1116)">
<circle cx="814.3" cy="1116" r="35.5" fill="#d0d0d0"/>
<circle cx="809.8" cy="1119.5" r="32.0" fill="#9a9a9a"/>
<path d="M774.8 1095.41 L843.8 1128.78 L839.8 1150.78 L774.8 1117.41 Z" fill="#666666"/>
</g>
<circle cx="814.3" cy="1218.3" r="35.5" fill="#0a0a0a"/>
<clipPath id="sc1218"><circle cx="814.3" cy="1218.3" r="33.3"/></clipPath>
<g clip-path="url(#sc1218)">
<circle cx="814.3" cy="1218.3" r="35.5" fill="#d0d0d0"/>
<circle cx="809.8" cy="1221.8" r="32.0" fill="#9a9a9a"/>
<path d="M774.8 1197.71 L843.8 1231.08 L839.8 1253.08 L774.8 1219.71 Z" fill="#666666"/>
</g>
<rect x="922.3" y="656.0" width="100.0" height="36.0" fill="#9c916d"/>
<rect x="943.3" y="659.0" width="58.0" height="30.0" fill="#e0e0e0" rx="4"/>
<rect x="958.3" y="659.0" width="28.0" height="30.0" fill="#f8f8f8"/>
<rect x="961.3" y="655.5" width="22.0" height="4.0" fill="#0d5a9a"/>
<rect x="961.3" y="688.5" width="22.0" height="4.0" fill="#0d5a9a"/>
<circle cx="972.3" cy="674" r="3.3" fill="#c9c9c9"/>
<rect x="922.3" y="777.3" width="100.0" height="36.0" fill="#9c916d"/>
<rect x="943.3" y="780.3" width="58.0" height="30.0" fill="#e0e0e0" rx="4"/>
<rect x="958.3" y="780.3" width="28.0" height="30.0" fill="#f8f8f8"/>
<rect x="961.3" y="776.8" width="22.0" height="4.0" fill="#0d5a9a"/>
<rect x="961.3" y="809.8" width="22.0" height="4.0" fill="#0d5a9a"/>
<circle cx="972.3" cy="795.3" r="3.3" fill="#c9c9c9"/>
<rect x="923.7" y="869.0" width="100.0" height="36.0" fill="#9c916d"/>
<rect x="944.7" y="872.0" width="58.0" height="30.0" fill="#e0e0e0" rx="4"/>
<rect x="959.7" y="872.0" width="28.0" height="30.0" fill="#f8f8f8"/>
<rect x="962.7" y="868.5" width="22.0" height="4.0" fill="#0d5a9a"/>
<rect x="962.7" y="901.5" width="22.0" height="4.0" fill="#0d5a9a"/>
<circle cx="973.7" cy="887" r="3.3" fill="#c9c9c9"/>
<rect x="925.2" y="989.0" width="100.0" height="36.0" fill="#9c916d"/>
<rect x="946.2" y="992.0" width="58.0" height="30.0" fill="#e0e0e0" rx="4"/>
<rect x="961.2" y="992.0" width="28.0" height="30.0" fill="#f8f8f8"/>
<rect x="964.2" y="988.5" width="22.0" height="4.0" fill="#0d5a9a"/>
<rect x="964.2" y="1021.5" width="22.0" height="4.0" fill="#0d5a9a"/>
<circle cx="975.2" cy="1007" r="3.3" fill="#c9c9c9"/>
<rect x="1073.5" y="472.0" width="285.0" height="601.2" fill="#1a1a1a"/>
<rect x="1122.0" y="486.5" width="193.0" height="571.5" fill="#303030"/>
<path d="M1122 486.5 H1315 L1297.6 491.5 H1140 Z" fill="#1f1f1f"/>
<path d="M1122 486.5 L1140 491.5 V1053 L1122 1058.5 Z" fill="#3d3d3d"/>
<path d="M1315 486.5 L1297.6 491.5 V1053 L1315 1058.5 Z" fill="#000000"/>
<path d="M1122 1058.5 L1140 1053 H1297.6 L1315 1058.5 Z" fill="#272727"/>
<clipPath id="chipc"><rect x="1140" y="491.5" width="157.6" height="561.5"/></clipPath>
<g clip-path="url(#chipc)"><circle cx="1218.5" cy="1058" r="35.6" fill="#383838"/><path d="M1218.5 1058 L1182 1058 A35.6 35.6 0 0 1 1218.5 1022.4 Z" fill="#222222"/><circle cx="1218.5" cy="1058" r="20.8" fill="#262626"/></g>
<circle cx="1268.4" cy="1012.2" r="14.7" fill="#232323"/>
<path d="M1100 512.3 H1132 V548.5 H1124.5 L1119 534.7 H1100 Z" fill="#8c8c8c"/>
<path d="M1337 512.3 H1305 V548.5 H1312.8 L1319.5 534.7 H1337 Z" fill="#8c8c8c"/>
<path d="M1100 583.5999999999999 H1119 L1124.5 569.8 H1132 V619.8 H1124.5 L1119 606.0 H1100 Z" fill="#8c8c8c"/>
<path d="M1337 583.5999999999999 H1319.5 L1312.8 569.8 H1305 V619.8 H1312.8 L1319.5 606.0 H1337 Z" fill="#8c8c8c"/>
<path d="M1100 654.9 H1119 L1124.5 641.1 H1132 V691.1 H1124.5 L1119 677.3000000000001 H1100 Z" fill="#8c8c8c"/>
<path d="M1337 654.9 H1319.5 L1312.8 641.1 H1305 V691.1 H1312.8 L1319.5 677.3000000000001 H1337 Z" fill="#8c8c8c"/>
<path d="M1100 726.1999999999999 H1119 L1124.5 712.4 H1132 V762.4 H1124.5 L1119 748.6 H1100 Z" fill="#8c8c8c"/>
<path d="M1337 726.1999999999999 H1319.5 L1312.8 712.4 H1305 V762.4 H1312.8 L1319.5 748.6 H1337 Z" fill="#8c8c8c"/>
<path d="M1100 797.5 H1119 L1124.5 783.7 H1132 V833.7 H1124.5 L1119 819.9000000000001 H1100 Z" fill="#8c8c8c"/>
<path d="M1337 797.5 H1319.5 L1312.8 783.7 H1305 V833.7 H1312.8 L1319.5 819.9000000000001 H1337 Z" fill="#8c8c8c"/>
<path d="M1100 868.8 H1119 L1124.5 855.0 H1132 V905.0 H1124.5 L1119 891.2 H1100 Z" fill="#8c8c8c"/>
<path d="M1337 868.8 H1319.5 L1312.8 855.0 H1305 V905.0 H1312.8 L1319.5 891.2 H1337 Z" fill="#8c8c8c"/>
<path d="M1100 940.0999999999999 H1119 L1124.5 926.3 H1132 V976.3 H1124.5 L1119 962.5 H1100 Z" fill="#8c8c8c"/>
<path d="M1337 940.0999999999999 H1319.5 L1312.8 926.3 H1305 V976.3 H1312.8 L1319.5 962.5 H1337 Z" fill="#8c8c8c"/>
<path d="M1100 1033.8 H1132 V997.5999999999999 H1124.5 L1119 1011.3999999999999 H1100 Z" fill="#8c8c8c"/>
<path d="M1337 1033.8 H1305 V997.5999999999999 H1312.8 L1319.5 1011.3999999999999 H1337 Z" fill="#8c8c8c"/>
<g transform="translate(1218.2,1002.8) rotate(-90)" fill="none" stroke="#e6e6e6" stroke-width="5.6" stroke-linecap="round" stroke-linejoin="miter">
<path d="M0 -40.8 V-3 H21.8"/>
<path d="M41.8 -40.8 H63 V-22.4 H41.8 V-3 H63"/>
<path d="M99.5 -3 H105.3 V-40.8 H83 V-22.4 H105.3"/>
<path d="M124.2 -40.8 H146.5 V-3 H124.2 M128.5 -22.4 H146.5"/>
<path d="M165.9 -40.8 H179 L187.7 -21.9 L179 -3 H165.9 M172.6 -40.8 V-3" stroke-linejoin="round"/>
</g>
<circle cx="1479.8" cy="547.5" r="71.8" fill="#1a1a1a"/><circle cx="1479.8" cy="549.9" r="46" fill="#ffffff"/>
<circle cx="1212" cy="1182" r="71.8" fill="#1a1a1a"/><circle cx="1212" cy="1184.4" r="46" fill="#ffffff"/>
<rect x="916.7" y="1168.2" width="188.6" height="164.8" fill="#1a1a1a"/>
<path d="M1546.1 653.5 H1589.5 L1605.0 669.0 V712.4000000000001 L1589.5 727.9000000000001 H1546.1 L1530.6 712.4000000000001 V669.0 Z" fill="#404040"/>
<path d="M1546.1 728.0 H1589.5 L1605.0 743.5 V786.9000000000001 L1589.5 802.4000000000001 H1546.1 L1530.6 786.9000000000001 V743.5 Z" fill="#404040"/>
<path d="M1546.1 802.5 H1589.5 L1605.0 818.0 V861.4000000000001 L1589.5 876.9000000000001 H1546.1 L1530.6 861.4000000000001 V818.0 Z" fill="#404040"/>
<path d="M1546.1 877.0 H1589.5 L1605.0 892.5 V935.9000000000001 L1589.5 951.4000000000001 H1546.1 L1530.6 935.9000000000001 V892.5 Z" fill="#404040"/>
<path d="M1546.1 951.5 H1589.5 L1605.0 967.0 V1010.4000000000001 L1589.5 1025.9 H1546.1 L1530.6 1010.4000000000001 V967.0 Z" fill="#404040"/>
<path d="M1546.1 1026.0 H1589.5 L1605.0 1041.5 V1084.9 L1589.5 1100.4 H1546.1 L1530.6 1084.9 V1041.5 Z" fill="#404040"/>
<path d="M1546.1 1100.5 H1589.5 L1605.0 1116.0 V1159.4 L1589.5 1174.9 H1546.1 L1530.6 1159.4 V1116.0 Z" fill="#404040"/>
<path d="M1546.1 1175.0 H1589.5 L1605.0 1190.5 V1233.9 L1589.5 1249.4 H1546.1 L1530.6 1233.9 V1190.5 Z" fill="#404040"/>
<path d="M1471.7 1100.5 H1515.1000000000001 L1530.6000000000001 1116.0 V1159.4 L1515.1000000000001 1174.9 H1471.7 L1456.2 1159.4 V1116.0 Z" fill="#404040"/>
<path d="M1471.7 1175.0 H1515.1000000000001 L1530.6000000000001 1190.5 V1233.9 L1515.1000000000001 1249.4 H1471.7 L1456.2 1233.9 V1190.5 Z" fill="#404040"/>
<path d="M1189.3 1349.5 H1232.7 L1248.2 1365.0 V1408.4 L1232.7 1423.9 H1189.3 L1173.8 1408.4 V1365.0 Z" fill="#404040"/>
<path d="M1263.6499999999999 1349.5 H1307.05 L1322.55 1365.0 V1408.4 L1307.05 1423.9 H1263.6499999999999 L1248.1499999999999 1408.4 V1365.0 Z" fill="#404040"/>
<path d="M1338.0 1349.5 H1381.4 L1396.9 1365.0 V1408.4 L1381.4 1423.9 H1338.0 L1322.5 1408.4 V1365.0 Z" fill="#404040"/>
<path d="M1412.35 1349.5 H1455.75 L1471.25 1365.0 V1408.4 L1455.75 1423.9 H1412.35 L1396.85 1408.4 V1365.0 Z" fill="#404040"/>
<path d="M1486.7 1349.5 H1530.1000000000001 L1545.6000000000001 1365.0 V1408.4 L1530.1000000000001 1423.9 H1486.7 L1471.2 1408.4 V1365.0 Z" fill="#404040"/>
<rect x="1555.3" y="678.2" width="25.0" height="25.0" fill="#8f8961"/>
<path d="M1555.3 678.2 H1580.3 L1576.3 682.2 H1559.3 Z" fill="#6f6a45"/>
<path d="M1555.3 703.2 H1580.3 L1576.3 699.2 H1559.3 Z" fill="#b8b084"/>
<path d="M1555.3 678.2 L1559.3 682.2 V699.2 L1555.3 703.2 Z" fill="#a09a70"/>
<path d="M1580.3 678.2 L1576.3 682.2 V699.2 L1580.3 703.2 Z" fill="#7d7750"/>
<rect x="1555.3" y="752.7" width="25.0" height="25.0" fill="#8f8961"/>
<path d="M1555.3 752.7 H1580.3 L1576.3 756.7 H1559.3 Z" fill="#6f6a45"/>
<path d="M1555.3 777.7 H1580.3 L1576.3 773.7 H1559.3 Z" fill="#b8b084"/>
<path d="M1555.3 752.7 L1559.3 756.7 V773.7 L1555.3 777.7 Z" fill="#a09a70"/>
<path d="M1580.3 752.7 L1576.3 756.7 V773.7 L1580.3 777.7 Z" fill="#7d7750"/>
<rect x="1555.3" y="827.2" width="25.0" height="25.0" fill="#8f8961"/>
<path d="M1555.3 827.2 H1580.3 L1576.3 831.2 H1559.3 Z" fill="#6f6a45"/>
<path d="M1555.3 852.2 H1580.3 L1576.3 848.2 H1559.3 Z" fill="#b8b084"/>
<path d="M1555.3 827.2 L1559.3 831.2 V848.2 L1555.3 852.2 Z" fill="#a09a70"/>
<path d="M1580.3 827.2 L1576.3 831.2 V848.2 L1580.3 852.2 Z" fill="#7d7750"/>
<rect x="1555.3" y="901.7" width="25.0" height="25.0" fill="#8f8961"/>
<path d="M1555.3 901.7 H1580.3 L1576.3 905.7 H1559.3 Z" fill="#6f6a45"/>
<path d="M1555.3 926.7 H1580.3 L1576.3 922.7 H1559.3 Z" fill="#b8b084"/>
<path d="M1555.3 901.7 L1559.3 905.7 V922.7 L1555.3 926.7 Z" fill="#a09a70"/>
<path d="M1580.3 901.7 L1576.3 905.7 V922.7 L1580.3 926.7 Z" fill="#7d7750"/>
<rect x="1555.3" y="976.2" width="25.0" height="25.0" fill="#8f8961"/>
<path d="M1555.3 976.2 H1580.3 L1576.3 980.2 H1559.3 Z" fill="#6f6a45"/>
<path d="M1555.3 1001.2 H1580.3 L1576.3 997.2 H1559.3 Z" fill="#b8b084"/>
<path d="M1555.3 976.2 L1559.3 980.2 V997.2 L1555.3 1001.2 Z" fill="#a09a70"/>
<path d="M1580.3 976.2 L1576.3 980.2 V997.2 L1580.3 1001.2 Z" fill="#7d7750"/>
<rect x="1555.3" y="1050.7" width="25.0" height="25.0" fill="#8f8961"/>
<path d="M1555.3 1050.7 H1580.3 L1576.3 1054.7 H1559.3 Z" fill="#6f6a45"/>
<path d="M1555.3 1075.7 H1580.3 L1576.3 1071.7 H1559.3 Z" fill="#b8b084"/>
<path d="M1555.3 1050.7 L1559.3 1054.7 V1071.7 L1555.3 1075.7 Z" fill="#a09a70"/>
<path d="M1580.3 1050.7 L1576.3 1054.7 V1071.7 L1580.3 1075.7 Z" fill="#7d7750"/>
<rect x="1555.3" y="1125.2" width="25.0" height="25.0" fill="#8f8961"/>
<path d="M1555.3 1125.2 H1580.3 L1576.3 1129.2 H1559.3 Z" fill="#6f6a45"/>
<path d="M1555.3 1150.2 H1580.3 L1576.3 1146.2 H1559.3 Z" fill="#b8b084"/>
<path d="M1555.3 1125.2 L1559.3 1129.2 V1146.2 L1555.3 1150.2 Z" fill="#a09a70"/>
<path d="M1580.3 1125.2 L1576.3 1129.2 V1146.2 L1580.3 1150.2 Z" fill="#7d7750"/>
<rect x="1555.3" y="1199.7" width="25.0" height="25.0" fill="#8f8961"/>
<path d="M1555.3 1199.7 H1580.3 L1576.3 1203.7 H1559.3 Z" fill="#6f6a45"/>
<path d="M1555.3 1224.7 H1580.3 L1576.3 1220.7 H1559.3 Z" fill="#b8b084"/>
<path d="M1555.3 1199.7 L1559.3 1203.7 V1220.7 L1555.3 1224.7 Z" fill="#a09a70"/>
<path d="M1580.3 1199.7 L1576.3 1203.7 V1220.7 L1580.3 1224.7 Z" fill="#7d7750"/>
<rect x="1480.9" y="1125.2" width="25.0" height="25.0" fill="#8f8961"/>
<path d="M1480.9 1125.2 H1505.9 L1501.9 1129.2 H1484.9 Z" fill="#6f6a45"/>
<path d="M1480.9 1150.2 H1505.9 L1501.9 1146.2 H1484.9 Z" fill="#b8b084"/>
<path d="M1480.9 1125.2 L1484.9 1129.2 V1146.2 L1480.9 1150.2 Z" fill="#a09a70"/>
<path d="M1505.9 1125.2 L1501.9 1129.2 V1146.2 L1505.9 1150.2 Z" fill="#7d7750"/>
<rect x="1480.9" y="1199.7" width="25.0" height="25.0" fill="#8f8961"/>
<path d="M1480.9 1199.7 H1505.9 L1501.9 1203.7 H1484.9 Z" fill="#6f6a45"/>
<path d="M1480.9 1224.7 H1505.9 L1501.9 1220.7 H1484.9 Z" fill="#b8b084"/>
<path d="M1480.9 1199.7 L1484.9 1203.7 V1220.7 L1480.9 1224.7 Z" fill="#a09a70"/>
<path d="M1505.9 1199.7 L1501.9 1203.7 V1220.7 L1505.9 1224.7 Z" fill="#7d7750"/>
<rect x="1198.5" y="1374.2" width="25.0" height="25.0" fill="#8f8961"/>
<path d="M1198.5 1374.2 H1223.5 L1219.5 1378.2 H1202.5 Z" fill="#6f6a45"/>
<path d="M1198.5 1399.2 H1223.5 L1219.5 1395.2 H1202.5 Z" fill="#b8b084"/>
<path d="M1198.5 1374.2 L1202.5 1378.2 V1395.2 L1198.5 1399.2 Z" fill="#a09a70"/>
<path d="M1223.5 1374.2 L1219.5 1378.2 V1395.2 L1223.5 1399.2 Z" fill="#7d7750"/>
<rect x="1272.85" y="1374.2" width="25.0" height="25.0" fill="#8f8961"/>
<path d="M1272.85 1374.2 H1297.85 L1293.85 1378.2 H1276.85 Z" fill="#6f6a45"/>
<path d="M1272.85 1399.2 H1297.85 L1293.85 1395.2 H1276.85 Z" fill="#b8b084"/>
<path d="M1272.85 1374.2 L1276.85 1378.2 V1395.2 L1272.85 1399.2 Z" fill="#a09a70"/>
<path d="M1297.85 1374.2 L1293.85 1378.2 V1395.2 L1297.85 1399.2 Z" fill="#7d7750"/>
<rect x="1347.2" y="1374.2" width="25.0" height="25.0" fill="#8f8961"/>
<path d="M1347.2 1374.2 H1372.2 L1368.2 1378.2 H1351.2 Z" fill="#6f6a45"/>
<path d="M1347.2 1399.2 H1372.2 L1368.2 1395.2 H1351.2 Z" fill="#b8b084"/>
<path d="M1347.2 1374.2 L1351.2 1378.2 V1395.2 L1347.2 1399.2 Z" fill="#a09a70"/>
<path d="M1372.2 1374.2 L1368.2 1378.2 V1395.2 L1372.2 1399.2 Z" fill="#7d7750"/>
<rect x="1421.55" y="1374.2" width="25.0" height="25.0" fill="#8f8961"/>
<path d="M1421.55 1374.2 H1446.55 L1442.55 1378.2 H1425.55 Z" fill="#6f6a45"/>
<path d="M1421.55 1399.2 H1446.55 L1442.55 1395.2 H1425.55 Z" fill="#b8b084"/>
<path d="M1421.55 1374.2 L1425.55 1378.2 V1395.2 L1421.55 1399.2 Z" fill="#a09a70"/>
<path d="M1446.55 1374.2 L1442.55 1378.2 V1395.2 L1446.55 1399.2 Z" fill="#7d7750"/>
<rect x="1495.9" y="1374.2" width="25.0" height="25.0" fill="#8f8961"/>
<path d="M1495.9 1374.2 H1520.9 L1516.9 1378.2 H1499.9 Z" fill="#6f6a45"/>
<path d="M1495.9 1399.2 H1520.9 L1516.9 1395.2 H1499.9 Z" fill="#b8b084"/>
<path d="M1495.9 1374.2 L1499.9 1378.2 V1395.2 L1495.9 1399.2 Z" fill="#a09a70"/>
<path d="M1520.9 1374.2 L1516.9 1378.2 V1395.2 L1520.9 1399.2 Z" fill="#7d7750"/>
<rect x="633.5" y="451.5" width="1141" height="997" fill="none" stroke="#000" stroke-opacity="0.28" stroke-width="3"/>
</g>
<linearGradient id="selg" x1="0" y1="0" x2="0" y2="1"><stop offset="0" stop-color="#1e4e8c"/><stop offset="1" stop-color="#24426c"/></linearGradient>
<rect x="3.5" y="268.5" width="70.5" height="95.0" fill="#1d1d1d" rx="13"/>
<rect x="6.5" y="271.5" width="64.5" height="89.0" fill="url(#selg)" rx="10"/>
<path d="M22 294 L22 337 L33 328 L41 346 L51 341 L43 324 L57 322 Z" fill="none" stroke="#ececec" stroke-width="5" stroke-linejoin="round"/>
<path d="M19.5 430 A37 37 0 0 1 56.5 393" fill="none" stroke="#9a9a9a" stroke-width="2.8"/>
<rect x="23.5" y="397" width="12.5" height="12.5" fill="#353535" stroke="#ececec" stroke-width="5.5"/>
<path d="M44.6 415.6 L59.5 423 L45.2 432.3 Z" fill="#ececec"/>
<circle cx="32.7" cy="502.2" r="12" fill="none" stroke="#ececec" stroke-width="5"/><rect x="36" y="504.8" width="21.3" height="21.5" fill="none" stroke="#ececec" stroke-width="5.5"/>
<rect x="33.5" y="502.3" width="13.5" height="14" fill="#353535"/><path d="M35 503.5 h11 M35 503.5 v11" stroke="#9a9a9a" stroke-width="2.5" fill="none"/><path d="M44.7 502.2 a12 12 0 0 1 -12 12" fill="none" stroke="#9a9a9a" stroke-width="2.5"/>
<rect x="0.0" y="559.0" width="78.0" height="3.0" fill="#2e2e2e"/>
<rect x="18.0" y="592.5" width="42.0" height="41.0" fill="#ececec" rx="5"/>
<rect x="23.0" y="597.5" width="32.0" height="31.0" fill="#ff1493"/>
<circle cx="38.8" cy="709.5" r="21" fill="#ececec"/><circle cx="38.8" cy="709.5" r="15.5" fill="#c4267e"/>
<path d="M32 788 L46.5 797.5 L42 814.5 L23 814.5 L17 798 Z" fill="#8e2065" stroke="#ececec" stroke-width="4.5" stroke-linejoin="round"/>
<path d="M47.6 796.0 L51.4 805.2 L61.4 806.0 L53.8 812.5 L56.1 822.2 L47.6 817.0 L39.1 822.2 L41.4 812.5 L33.8 806.0 L43.8 805.2 Z" fill="#5a2245" stroke="#ececec" stroke-width="4" stroke-linejoin="round"/>
<path d="M39 878 L59 888 L59 911 L39 922 L19 911 L19 888 Z" fill="#ececec" stroke="#ececec" stroke-width="4" stroke-linejoin="round"/>
<path d="M39 881 L55 889.5 L39 898 L23 889.5 Z" fill="#5c2244"/><path d="M22 893 L37 901 L37 918 L22 910 Z" fill="#ff1493"/><path d="M56 893 L41 901 L41 918 L56 910 Z" fill="#8b2363"/>
<path d="M37.7 999.9 L37.5 1000.0 L37.2 1000.0 L36.9 1000.0 L36.6 999.9 L36.3 999.8 L36.0 999.6 L35.7 999.3 L35.4 999.0 L35.2 998.7 L35.0 998.3 L34.9 997.8 L34.8 997.3 L34.8 996.8 L34.9 996.3 L35.1 995.8 L35.3 995.3 L35.6 994.8 L36.0 994.3 L36.5 993.9 L37.1 993.5 L37.7 993.2 L38.3 993.0 L39.0 992.9 L39.8 992.8 L40.6 992.9 L41.3 993.1 L42.1 993.4 L42.8 993.7 L43.5 994.2 L44.2 994.8 L44.8 995.5 L45.3 996.3 L45.7 997.2 L45.9 998.1 L46.1 999.0 L46.2 1000.1 L46.1 1001.1 L45.9 1002.1 L45.5 1003.1 L45.0 1004.1 L44.4 1005.0 L43.6 1005.9 L42.7 1006.7 L41.7 1007.3 L40.6 1007.9 L39.5 1008.3 L38.2 1008.5 L37.0 1008.6 L35.6 1008.5 L34.3 1008.3 L33.1 1007.9 L31.8 1007.3 L30.6 1006.5 L29.6 1005.6 L28.6 1004.6 L27.7 1003.4 L27.0 1002.1 L26.5 1000.7 L26.1 999.2 L26.0 997.6 L26.0 996.1 L26.2 994.5 L26.7 992.9 L27.3 991.4 L28.1 990.0 L29.2 988.6 L30.4 987.4 L31.7 986.3 L33.2 985.5 L34.9 984.7 L36.6 984.2 L38.4 984.0 L40.2 983.9 L42.1 984.1 L44.0 984.5 L45.7 985.2 L47.5 986.1 L49.1 987.2 L50.6 988.5 L51.9 990.0 L53.0 991.7 L53.9 993.6 L54.6 995.5 L55.0 997.6 L55.2 999.7 L55.1 1001.8 L54.7 1003.9 L54.0 1006.0 L53.1 1008.0 L51.9 1009.9" fill="none" stroke="#ececec" stroke-width="6" stroke-linecap="round" stroke-linejoin="round"/>
<rect x="0.0" y="1047.0" width="78.0" height="3.0" fill="#2e2e2e"/>
<circle cx="21" cy="1083" r="6" fill="#009909"/><path d="M21 1083 V1105" stroke="#009909" stroke-width="3.5"/><rect x="15" y="1104" width="12" height="12" fill="#009909"/>
<path d="M23 1104 Q30 1084 51 1082" fill="none" stroke="#9a9a9a" stroke-width="2.5"/>
<path d="M52 1093 L62 1102 L59 1106 L53 1119 L30 1126 L37 1104 L49 1098 Z" fill="#ececec"/><path d="M33 1123 L46 1110" stroke="#353535" stroke-width="2.5"/><circle cx="47" cy="1109" r="2.5" fill="#353535"/>
<path d="M18.5 1190 C14 1178 22 1174 27 1180 C31 1185 35 1187 37.5 1181 C40 1175 45 1188 37 1194 C31 1198 24 1198 22.5 1204" fill="none" stroke="#009909" stroke-width="4.5" stroke-linecap="round"/>
<path d="M22 1219 L27 1207 L33 1213 Z" fill="#009909"/>
<path d="M30 1205 L50 1185 L58 1193 L38 1213 Z" fill="#ececec"/><path d="M52 1183 L55 1180 Q58 1178 61 1181 L62 1182 Q65 1185 63 1188 L60 1191 Z" fill="#ececec"/>
<path d="M26 1275 c8 2 8 9 2 12 c-6 3 -8 7 -5 10 c4 2 7 -1 10 -3" fill="none" stroke="#009909" stroke-width="4.5" stroke-linecap="round"/>
<path d="M18 1314 Q22 1304 30 1304 L33 1308 Q30 1314 18 1314 Z" fill="#009909"/>
<path d="M61 1275.5 Q62 1277 60 1279 L39.5 1303 L33.5 1297 L58 1276 Q60 1274.5 61 1275.5 Z" fill="#ececec"/><path d="M31.8 1299 L37.2 1304.5 L34.5 1307 L29.5 1301.5 Z" fill="#ececec"/>
<rect x="57.0" y="1366.0" width="6.0" height="48.0" fill="#009909"/>
<rect x="0.0" y="1440.0" width="78.0" height="3.0" fill="#2e2e2e"/>
<linearGradient id="gtg" x1="0" y1="0" x2="1" y2="1"><stop offset="0" stop-color="#1e90e0"/><stop offset="0.5" stop-color="#7cc4ee"/><stop offset="1" stop-color="#cfe8f8"/></linearGradient>
<rect x="16.4" y="1472.9" width="45.2" height="45.6" rx="3" fill="none" stroke="#ececec" stroke-width="3"/>
<clipPath id="gtc"><rect x="20.3" y="1477" width="37.2" height="37.3"/></clipPath><g clip-path="url(#gtc)"><rect x="20" y="1476" width="38" height="39" fill="url(#gtg)"/><path d="M8 1516 l40 -40" stroke="#ffffff" stroke-opacity="0.16" stroke-width="4.5"/><path d="M19 1516 l40 -40" stroke="#ffffff" stroke-opacity="0.16" stroke-width="4.5"/><path d="M30 1516 l40 -40" stroke="#ffffff" stroke-opacity="0.16" stroke-width="4.5"/><path d="M41 1516 l40 -40" stroke="#ffffff" stroke-opacity="0.16" stroke-width="4.5"/><path d="M52 1516 l40 -40" stroke="#ffffff" stroke-opacity="0.16" stroke-width="4.5"/><path d="M63 1516 l40 -40" stroke="#ffffff" stroke-opacity="0.16" stroke-width="4.5"/><path d="M58 1501 v14 h-14 z" fill="#ececec"/></g>
<radialGradient id="mtg" cx="0.5" cy="0.5" r="0.5"><stop offset="0" stop-color="#1ea2f6"/><stop offset="0.35" stop-color="#1788d4"/><stop offset="0.75" stop-color="#1c5178"/><stop offset="1" stop-color="#272a2d"/></radialGradient>
<rect x="16.5" y="1568.5" width="45" height="45" fill="#272727" stroke="#ececec" stroke-width="3.2"/><circle cx="39" cy="1591" r="20" fill="url(#mtg)"/>
<path d="M39 1569 Q29 1580 39 1591 Q49 1602 40 1613 M17 1589 Q28 1602 39 1591 Q50 1580 61 1590" fill="none" stroke="#ececec" stroke-width="3.8"/>
<path d="M25.5 1666 Q33 1678 33 1680.5 a7.5 7.5 0 0 1 -15 0 Q18 1678 25.5 1666 Z" fill="#1192e8"/>
<g transform="translate(42.9,1690.1) rotate(45)"><rect x="-5" y="-26" width="10" height="18" rx="5" fill="#ececec"/><rect x="-9.5" y="-10.5" width="19" height="6.5" fill="#ececec"/><rect x="-4.5" y="-5" width="9" height="6" fill="#ececec"/><path d="M-4.2 0 V21 a4.2 4.2 0 0 0 8.4 0 V0" fill="none" stroke="#ececec" stroke-width="3.6"/></g>
<path d="M25.5 1786.5 Q33 1798 33 1800.5 a7.5 7.5 0 0 1 -15 0 Q18 1798 25.5 1786.5 Z" fill="#1192e8"/>
<path d="M49 1761.4 L62 1779.5 L45.7 1796 L28 1781.5 Z" fill="#ececec" stroke="#ececec" stroke-width="3" stroke-linejoin="round"/>
<path d="M47.5 1767 L57.5 1778.5 L35 1778.5 Z" fill="#353535"/>
<path d="M51 1760.5 L28.5 1781" stroke="#ececec" stroke-width="3.8" stroke-linecap="round"/>
<rect x="2340.0" y="283.0" width="1347.0" height="1505.0" fill="#282828"/>
<rect x="2340.0" y="391.0" width="1347.0" height="3.0" fill="#1e1e1e"/>
<rect x="2340.0" y="394.0" width="1347.0" height="3.0" fill="#2a2a2a"/>
<rect x="3135.0" y="283.0" width="180.0" height="99.0" fill="#303030"/>
<rect x="3135.0" y="382.0" width="180.0" height="12.0" fill="#17539f"/>
<path d="M2411 319 h28 l-8 8.5 h-28 z" fill="#1e90e0"/><path d="M2417 334 h28 l-8 8.5 h-28 z" fill="#79c3ec"/><path d="M2423 349 h28 l-8 8.5 h-28 z" fill="#ececec"/>
<rect x="2597" y="315" width="44" height="44" fill="none" stroke="#ececec" stroke-width="4"/><rect x="2601" y="319" width="36" height="6" fill="#009909"/>
<path d="M2614 332 l-10 9.5 l10 9.5 M2624 332 l10 9.5 l-10 9.5" fill="none" stroke="#ececec" stroke-width="3.6"/>
<path d="M2823 314 h-34 v34" fill="none" stroke="#ececec" stroke-width="3.5"/>
<path d="M2832 318 Q2836 320 2832 325 L2812 346 L2807 342 L2826 321 Q2830 317 2832 318 Z" fill="#ececec"/><path d="M2805 344 l5 4 l-4 4 l-4 -3 z" fill="#ececec"/>
<path d="M2788 358 Q2792 348 2800 349 L2803 353 Q2800 358 2788 358 Z" fill="#1e90e0"/>
<path d="M2984 319 h37 v10 h-3 q-1 -5 -6 -5 h-6 v26 q0 4 5 4 v2 h-17 v-2 q5 0 5 -4 v-26 h-6 q-5 0 -6 5 h-3 z" fill="#ececec"/>
<path d="M3193 355.3 H3180 V318.8 H3202.5 L3210 326.5 V343" fill="none" stroke="#ececec" stroke-width="6" stroke-linejoin="round"/>
<path d="M3200 343 L3209.5 356" stroke="#303030" stroke-width="12"/>
<circle cx="3196.5" cy="339.5" r="11.5" fill="#303030"/>
<circle cx="3196.5" cy="339.5" r="9.3" fill="#ececec"/>
<path d="M3200.5 344.5 L3210 357.5" stroke="#ececec" stroke-width="7.5"/><path d="M3204 358.5 h10" stroke="#303030" stroke-width="3"/>
<path d="M3196.5 339.5 m-1.5 -1 l-9 -3.5 l5.5 -8 l6.5 7.5 a4 4 0 1 1 -3 4 z" fill="#303030"/>
<path d="M3245 324 l20 22 M3265 324 l-20 22" stroke="#111" stroke-width="6.5"/><path d="M3245 327 l20 22 M3265 327 l-20 22" stroke="#8f8f8f" stroke-width="6.5"/>
<path d="M3414 330 v-4 l-9 -10 h-19 q-3 0 -3 3 v35 q0 3 3 3 h26 q2 0 2 -3 v-2" fill="none" stroke="#ececec" stroke-width="6" stroke-linejoin="round"/><path d="M3398 316 v12 h12" fill="none" stroke="#ececec" stroke-width="5"/>
<path d="M3402 339.5 h18" stroke="#009909" stroke-width="6.5"/><path d="M3418 330 l11 9.5 l-11 9.5 z" fill="#009909"/>
<rect x="3594.0" y="292.5" width="89.5" height="89.5" fill="#2f2f2f" rx="13"/>
<path d="M3621 328 l18 17 l18 -17" fill="none" stroke="#111" stroke-width="5"/><path d="M3621 331 l18 17 l18 -17" fill="none" stroke="#8f8f8f" stroke-width="5"/>
<rect x="2343.0" y="397.0" width="1300.0" height="1391.0" fill="#1b1b1b"/>
<rect x="2346.0" y="400.0" width="1291.0" height="1388.0" fill="#2d2d2d"/>
<rect x="2346.0" y="400.0" width="1291.0" height="78.0" fill="#262626"/>
<rect x="2346.0" y="478.0" width="1291.0" height="3.0" fill="#1b1b1b"/>
<rect x="3643.0" y="397.0" width="44.0" height="1391.0" fill="#2b2b2b"/>
<rect x="3651.0" y="405.5" width="24.5" height="1030.0" fill="#a4a4a2" rx="12.25"/>
<rect x="2367.0" y="472.0" width="156.0" height="11.0" fill="#17539f"/>
<linearGradient id="bg2497_570" x1="0" y1="0" x2="0" y2="1"><stop offset="0" stop-color="#383838"/><stop offset="1" stop-color="#323232"/></linearGradient>
<rect x="2497.5" y="570.0" width="291.0" height="99.5" fill="#161616" rx="13"/>
<rect x="2500.5" y="573.0" width="285.0" height="92.5" fill="url(#bg2497_570)" rx="10"/>
<path d="M2718.5 609 H2754.5 L2736.5 627.5 Z" fill="#eeeeec"/>
<path d="M2718.5 608 H2754.5" stroke="#111" stroke-width="2"/>
<linearGradient id="bg2797_570" x1="0" y1="0" x2="0" y2="1"><stop offset="0" stop-color="#383838"/><stop offset="1" stop-color="#323232"/></linearGradient>
<rect x="2797.5" y="570.0" width="177.0" height="99.5" fill="#161616" rx="13"/>
<rect x="2800.5" y="573.0" width="171.0" height="92.5" fill="url(#bg2797_570)" rx="10"/>
<rect x="2804" y="576.5" width="164" height="86" rx="9" fill="none" stroke="#9a9a9a" stroke-width="2.5" stroke-dasharray="7 5"/>
<path d="M2904.5 609 H2940 L2922.25 627.5 Z" fill="#eeeeec"/>
<path d="M2904.5 608 H2940" stroke="#111" stroke-width="2"/>
<rect x="2497.0" y="683.0" width="478.5" height="99.5" fill="#1c1c1c" rx="13"/>
<rect x="2500.0" y="686.0" width="472.5" height="93.5" fill="#2d2d2d" rx="10"/>
<path d="M2872.5 686 V779.5 M2924 686 V779.5" stroke="#272727" stroke-width="3"/>
<path d="M2881.0 734.25 h35.5" stroke="#eeeeec" stroke-width="5.0"/>
<path d="M2932 734.25 h35.5 M2949.75 716.25 v36" stroke="#eeeeec" stroke-width="5.0"/>
<rect x="2497.0" y="797.0" width="478.5" height="99.0" fill="#1c1c1c" rx="13"/>
<rect x="2500.0" y="800.0" width="472.5" height="93.0" fill="#2d2d2d" rx="10"/>
<path d="M2872.5 800 V893 M2924 800 V893" stroke="#272727" stroke-width="3"/>
<path d="M2881.0 848.0 h35.5" stroke="#eeeeec" stroke-width="5.0"/>
<path d="M2932 848.0 h35.5 M2949.75 830.0 v36" stroke="#eeeeec" stroke-width="5.0"/>
<path d="M3011 756 v11 M3003 777 v-5 a8 8 0 0 1 16 0 v5" fill="none" stroke="#ececec" stroke-width="3.2"/>
<path d="M3011 826 v-11 M3003 805 v5 a8 8 0 0 0 16 0 v-5" fill="none" stroke="#ececec" stroke-width="3.2"/>
<linearGradient id="rbg" x1="0" y1="0" x2="0" y2="1"><stop offset="0" stop-color="#3c3c3c"/><stop offset="1" stop-color="#353535"/></linearGradient>
<circle cx="2718" cy="949" r="23.7" fill="#111"/><circle cx="2718" cy="949" r="20.7" fill="url(#rbg)"/>
<path d="M2763 921.5 h42 v38 l-17 17 h-25 z" fill="none" stroke="#ececec" stroke-width="3.5"/><path d="M2805 959.5 h-17 v17" fill="none" stroke="#ececec" stroke-width="3.5"/>
<circle cx="2865" cy="949" r="23.7" fill="#1c70da"/><circle cx="2865" cy="949" r="11.4" fill="#ffffff"/>
<path d="M2903 929 h57 v25 l-16 16 h-41 z" fill="none" stroke="#ececec" stroke-width="3.5"/><path d="M2960 954 h-16 v16" fill="none" stroke="#ececec" stroke-width="3.5"/>
<linearGradient id="bg2826_1001" x1="0" y1="0" x2="0" y2="1"><stop offset="0" stop-color="#383838"/><stop offset="1" stop-color="#323232"/></linearGradient>
<rect x="2826.5" y="1001.5" width="148.0" height="99.0" fill="#161616" rx="13"/>
<rect x="2829.5" y="1004.5" width="142.0" height="92.0" fill="url(#bg2826_1001)" rx="10"/>
<path d="M2892 1026 h17 l-8.5 6 z M2892 1074 h17 l-8.5 -6 z M2877 1041 v17 l6 -8.5 z M2925 1041 v17 l-6 -8.5 z" fill="#009909"/>
<path d="M2889 1038 h14 l10 10 v15 q0 2 -2 2 h-22 q-2 0 -2 -2 v-23 q0 -2 2 -2 z" fill="#ececec"/><path d="M2898 1042 v11 h11" fill="none" stroke="#2d2d2d" stroke-width="3.5"/>
<rect x="2496.5" y="1133.0" width="479.5" height="100.0" fill="#1c1c1c" rx="13"/>
<rect x="2499.5" y="1136.0" width="473.5" height="94.0" fill="#2d2d2d" rx="10"/>
<path d="M2872.5 1136 V1230 M2924 1136 V1230" stroke="#272727" stroke-width="3"/>
<path d="M2881.0 1184.5 h35.5" stroke="#eeeeec" stroke-width="5.0"/>
<path d="M2932 1184.5 h35.5 M2949.75 1166.5 v36" stroke="#eeeeec" stroke-width="5.0"/>
<circle cx="3010" cy="1183" r="6.5" fill="#ececec"/>
<path d="M2385 1355 l18 17.3 l-18 17.3 z" fill="#ececec"/>
<circle cx="2322" cy="1022.5" r="4.5" fill="#e4e4e4"/>
<circle cx="2322" cy="1035.5" r="4.5" fill="#e4e4e4"/>
<circle cx="2322" cy="1049" r="4.5" fill="#e4e4e4"/>
<linearGradient id="bg3352_570" x1="0" y1="0" x2="0" y2="1"><stop offset="0" stop-color="#383838"/><stop offset="1" stop-color="#323232"/></linearGradient>
<rect x="3352.0" y="570.0" width="178.0" height="99.5" fill="#161616" rx="13"/>
<rect x="3355.0" y="573.0" width="172.0" height="92.5" fill="url(#bg3352_570)" rx="10"/>
<path d="M3459 609 H3495 L3477.0 627.5 Z" fill="#eeeeec"/>
<path d="M3459 608 H3495" stroke="#111" stroke-width="2"/>
<rect x="3039.0" y="682.0" width="492.0" height="395.5" fill="#d1d1d1" rx="7"/>
<filter id="pvsh" x="-10%" y="-10%" width="130%" height="130%"><feGaussianBlur stdDeviation="5.5"/></filter><rect x="3116" y="732" width="358" height="312" fill="#000" opacity="0.5" filter="url(#pvsh)"/>
<rect x="3107.0" y="723.0" width="359.5" height="313.5" fill="#8e8e8e"/>
<rect x="3109.5" y="725.5" width="354.5" height="308.5" fill="#ffffff"/>
<linearGradient id="bg3039_1091" x1="0" y1="0" x2="0" y2="1"><stop offset="0" stop-color="#383838"/><stop offset="1" stop-color="#323232"/></linearGradient>
<rect x="3039.5" y="1091.5" width="155.0" height="99.5" fill="#161616" rx="13"/>
<rect x="3042.5" y="1094.5" width="149.0" height="92.5" fill="url(#bg3039_1091)" rx="10"/>
<rect x="3069.0" y="1105.0" width="96.0" height="69.0" fill="#ffffff" rx="10"/>
<linearGradient id="bg3207_1091" x1="0" y1="0" x2="0" y2="1"><stop offset="0" stop-color="#383838"/><stop offset="1" stop-color="#323232"/></linearGradient>
<rect x="3207.5" y="1091.5" width="155.0" height="99.5" fill="#161616" rx="13"/>
<rect x="3210.5" y="1094.5" width="149.0" height="92.5" fill="url(#bg3207_1091)" rx="10"/>
<clipPath id="bsw"><rect x="3237" y="1105" width="96" height="69" rx="10"/></clipPath><g clip-path="url(#bsw)"><rect x="3237" y="1105" width="48" height="69" fill="#858585"/><rect x="3237" y="1123" width="18" height="18" fill="#969696"/><rect x="3237" y="1159" width="18" height="18" fill="#969696"/><rect x="3255" y="1105" width="18" height="18" fill="#969696"/><rect x="3255" y="1141" width="18" height="18" fill="#969696"/><rect x="3273" y="1123" width="18" height="18" fill="#969696"/><rect x="3273" y="1159" width="18" height="18" fill="#969696"/><rect x="3285" y="1105" width="48" height="69" fill="#000"/></g>
<linearGradient id="bg3376_1091" x1="0" y1="0" x2="0" y2="1"><stop offset="0" stop-color="#383838"/><stop offset="1" stop-color="#323232"/></linearGradient>
<rect x="3376.0" y="1091.5" width="154.0" height="99.5" fill="#161616" rx="13"/>
<rect x="3379.0" y="1094.5" width="148.0" height="92.5" fill="url(#bg3376_1091)" rx="10"/>
<rect x="3405.0" y="1105.0" width="96.0" height="69.0" fill="#d1d1d1" rx="10"/>
<rect x="3051.0" y="1285.5" width="47.5" height="47.5" fill="#0c0c0c" rx="9"/>
<rect x="3054.0" y="1288.5" width="41.5" height="41.5" fill="url(#rbg)" rx="6"/>
<linearGradient id="cb3051_1348" x1="0" y1="0" x2="0" y2="1"><stop offset="0" stop-color="#1e72e0"/><stop offset="1" stop-color="#1a64c4"/></linearGradient>
<rect x="3051.0" y="1348.5" width="47.5" height="47.5" fill="#185cb6" rx="9"/>
<rect x="3054.0" y="1351.5" width="41.5" height="40.5" fill="url(#cb3051_1348)" rx="6"/>
<path d="M3060.5 1374.5 L3070.5 1384.0 L3089.5 1365.0" fill="none" stroke="#ffffff" stroke-width="7.5"/>
<linearGradient id="cb3087_1411" x1="0" y1="0" x2="0" y2="1"><stop offset="0" stop-color="#1e72e0"/><stop offset="1" stop-color="#1a64c4"/></linearGradient>
<rect x="3087.0" y="1411.3" width="47.5" height="47.5" fill="#185cb6" rx="9"/>
<rect x="3090.0" y="1414.3" width="41.5" height="40.5" fill="url(#cb3087_1411)" rx="6"/>
<path d="M3096.5 1437.3 L3106.5 1446.8 L3125.5 1427.8" fill="none" stroke="#ffffff" stroke-width="7.5"/>
<linearGradient id="cb3087_1474" x1="0" y1="0" x2="0" y2="1"><stop offset="0" stop-color="#1e72e0"/><stop offset="1" stop-color="#1a64c4"/></linearGradient>
<rect x="3087.0" y="1474.0" width="47.5" height="47.5" fill="#185cb6" rx="9"/>
<rect x="3090.0" y="1477.0" width="41.5" height="40.5" fill="url(#cb3087_1474)" rx="6"/>
<path d="M3096.5 1500 L3106.5 1509.5 L3125.5 1490.5" fill="none" stroke="#ffffff" stroke-width="7.5"/>
<rect x="3051.0" y="1537.3" width="47.5" height="47.5" fill="#0c0c0c" rx="9"/>
<rect x="3054.0" y="1540.3" width="41.5" height="41.5" fill="url(#rbg)" rx="6"/>
<linearGradient id="cb3051_1675" x1="0" y1="0" x2="0" y2="1"><stop offset="0" stop-color="#1e72e0"/><stop offset="1" stop-color="#1a64c4"/></linearGradient>
<rect x="3051.0" y="1675.5" width="47.5" height="47.5" fill="#185cb6" rx="9"/>
<rect x="3054.0" y="1678.5" width="41.5" height="40.5" fill="url(#cb3051_1675)" rx="6"/>
<path d="M3060.5 1701.5 L3070.5 1711.0 L3089.5 1692.0" fill="none" stroke="#ffffff" stroke-width="7.5"/>
<rect x="3051.0" y="1738.3" width="47.5" height="47.5" fill="#0c0c0c" rx="9"/>
<rect x="3054.0" y="1741.3" width="41.5" height="41.5" fill="url(#rbg)" rx="6"/>
<path d="M3747 316 h21 l12.5 12.5 v23 q0 3 -3 3 h-30.5 q-3 0 -3 -3 v-32.5 q0 -3 3 -3 z" fill="#ececec"/><path d="M3750 322 h13.5 v11.5 h11 v15.5 h-24.5 z" fill="#353535"/>
<path d="M3785 307 l2.8 6.5 l7 0.6 l-5.3 4.6 l1.6 6.9 l-6.1 -3.7 l-6.1 3.7 l1.6 -6.9 l-5.3 -4.6 l7 -0.6 z" fill="#009909"/>
<path d="M3744 421 h18 l4 10 h20 v8 h-34 l-6 22 h-2 z" fill="#ececec"/><path d="M3755 442 h36 l-5 21 h-42 v-3 l4 -1 z" fill="#ececec"/>
<path d="M3767.5 529 v18" stroke="#009909" stroke-width="6.5"/><path d="M3756 544 h23 l-11.5 12 z" fill="#009909"/>
<path d="M3755 553 l-8 13 v11 h42 v-11 l-8 -13 h-5 v4 h2 l5 9 h-30 l5 -9 h2 v-4 z" fill="#ececec"/><path d="M3760 568.5 h15" stroke="#353535" stroke-width="3"/>
<rect x="3756" y="643" width="24" height="8" fill="#c4c4c4"/><path d="M3750 654 h36 q4 0 4 4 v12 h-6 v-6 h-32 v6 h-6 v-12 q0 -4 4 -4 z" fill="#c4c4c4"/><rect x="3756" y="667" width="24" height="14" fill="#ececec"/>
<rect x="3714.0" y="724.5" width="107.0" height="3.0" fill="#2e2e2e"/>
<path d="M3755 786 v-18 q0 -3 3 -3 h18 l11 11 v28 q0 3 -3 3 h-26 q-3 0 -3 -3 v-3" fill="none" stroke="#ececec" stroke-width="6" stroke-linejoin="round"/><path d="M3774 766 v12 h12" fill="none" stroke="#ececec" stroke-width="5"/>
<path d="M3747 787.5 h20" stroke="#009909" stroke-width="6.5"/><path d="M3763 778 l11 9.5 l-11 9.5 z" fill="#009909"/>
<path d="M3779 890 v-3 l-11 -11 h-18 q-3 0 -3 3 v36 q0 3 3 3 h26 q3 0 3 -3 v-3" fill="none" stroke="#ececec" stroke-width="6" stroke-linejoin="round"/><path d="M3766 877 v12 h12" fill="none" stroke="#ececec" stroke-width="5"/>
<path d="M3765 901.5 h20" stroke="#009909" stroke-width="6.5"/><path d="M3781 892 l11 9.5 l-11 9.5 z" fill="#009909"/>
<rect x="3714.0" y="958.0" width="107.0" height="3.0" fill="#2e2e2e"/>
<path d="M3762 1016.8 h15 a9 9 0 0 1 0 18 h-3" fill="none" stroke="#ececec" stroke-width="6.5"/><path d="M3765 1003.4 v27 l-17 -13.5 z" fill="#ececec"/>
<path d="M3774 1128.7 h-15 a9 9 0 0 0 0 18 h3" fill="none" stroke="#7a7a7a" stroke-width="6.5"/><path d="M3771 1115.3 v27 l17 -13.5 z" fill="#7a7a7a"/>
<rect x="3714.0" y="1192.0" width="107.0" height="3.0" fill="#2e2e2e"/>
<rect x="3744" y="1231" width="33" height="33" fill="#ececec"/><rect x="3757" y="1246" width="37" height="35" fill="#353535"/><rect x="3760" y="1249" width="32" height="30" fill="#ececec"/>
<path d="M3753 1345 l21 38 M3783 1345 l-21 38" stroke="#ececec" stroke-width="6"/><circle cx="3754" cy="1381" r="7.5" fill="none" stroke="#ececec" stroke-width="5.5"/><circle cx="3782" cy="1381" r="7.5" fill="none" stroke="#ececec" stroke-width="5.5"/>
<path d="M3747 1460 h39 v39 h-39 z" fill="none" stroke="#ececec" stroke-width="4"/><rect x="3756" y="1456" width="21" height="9" rx="2" fill="#ececec"/><path d="M3753 1468 h27 v19 l-8 7 h-19 z" fill="#ececec"/>
<rect x="3714.0" y="1537.0" width="107.0" height="3.0" fill="#2e2e2e"/>
<linearGradient id="bg3715_1550" x1="0" y1="0" x2="0" y2="1"><stop offset="0" stop-color="#383838"/><stop offset="1" stop-color="#323232"/></linearGradient>
<rect x="3715.0" y="1550.0" width="106.0" height="100.0" fill="#161616" rx="13"/>
<rect x="3718.0" y="1553.0" width="100.0" height="93.0" fill="url(#bg3715_1550)" rx="10"/>
<path d="M3750 1591 H3786 L3768.0 1609 Z" fill="#eeeeec"/>
<path d="M3750 1590 H3786" stroke="#111" stroke-width="2"/>
<rect x="3714.0" y="1661.0" width="107.0" height="3.0" fill="#2e2e2e"/>
<rect x="3.0" y="1810.0" width="99.0" height="99.0" fill="#ffffff"/>
<path d="M12 1819 L93 1900 M93 1819 L12 1900" stroke="#c8203a" stroke-width="7" stroke-linecap="round"/>
<rect x="106.0" y="1810.0" width="98.0" height="99.0" fill="#000000"/>
<rect x="107.5" y="1811.5" width="95.0" height="96.0" fill="none" stroke="#808080" stroke-opacity="0.14" stroke-width="3"/>
<rect x="207.5" y="1810.0" width="98.5" height="99.0" fill="#808080"/>
<rect x="209.0" y="1811.5" width="95.5" height="96.0" fill="none" stroke="#808080" stroke-opacity="0.14" stroke-width="3"/>
<rect x="309.0" y="1810.0" width="99.0" height="99.0" fill="#ffffff"/>
<rect x="411.0" y="1810.0" width="57.0" height="48.0" fill="#1a1a1a"/>
<rect x="412.5" y="1811.5" width="54.0" height="45.0" fill="none" stroke="#808080" stroke-opacity="0.14" stroke-width="3"/>
<rect x="411.0" y="1861.0" width="57.0" height="48.0" fill="#d45500"/>
<rect x="412.5" y="1862.5" width="54.0" height="45.0" fill="none" stroke="#808080" stroke-opacity="0.14" stroke-width="3"/>
<rect x="471.0" y="1810.0" width="57.0" height="48.0" fill="#333333"/>
<rect x="472.5" y="1811.5" width="54.0" height="45.0" fill="none" stroke="#808080" stroke-opacity="0.14" stroke-width="3"/>
<rect x="471.0" y="1861.0" width="57.0" height="48.0" fill="#ff6600"/>
<rect x="472.5" y="1862.5" width="54.0" height="45.0" fill="none" stroke="#808080" stroke-opacity="0.14" stroke-width="3"/>
<rect x="531.0" y="1810.0" width="57.0" height="48.0" fill="#4d4d4d"/>
<rect x="532.5" y="1811.5" width="54.0" height="45.0" fill="none" stroke="#808080" stroke-opacity="0.14" stroke-width="3"/>
<rect x="531.0" y="1861.0" width="57.0" height="48.0" fill="#ff7f2a"/>
<rect x="532.5" y="1862.5" width="54.0" height="45.0" fill="none" stroke="#808080" stroke-opacity="0.14" stroke-width="3"/>
<rect x="591.0" y="1810.0" width="57.0" height="48.0" fill="#666666"/>
<rect x="592.5" y="1811.5" width="54.0" height="45.0" fill="none" stroke="#808080" stroke-opacity="0.14" stroke-width="3"/>
<rect x="591.0" y="1861.0" width="57.0" height="48.0" fill="#ff9955"/>
<rect x="592.5" y="1862.5" width="54.0" height="45.0" fill="none" stroke="#808080" stroke-opacity="0.14" stroke-width="3"/>
<rect x="651.0" y="1810.0" width="57.0" height="48.0" fill="#999999"/>
<rect x="652.5" y="1811.5" width="54.0" height="45.0" fill="none" stroke="#808080" stroke-opacity="0.14" stroke-width="3"/>
<rect x="651.0" y="1861.0" width="57.0" height="48.0" fill="#ffb380"/>
<rect x="652.5" y="1862.5" width="54.0" height="45.0" fill="none" stroke="#808080" stroke-opacity="0.14" stroke-width="3"/>
<rect x="711.0" y="1810.0" width="57.0" height="48.0" fill="#b3b3b3"/>
<rect x="712.5" y="1811.5" width="54.0" height="45.0" fill="none" stroke="#808080" stroke-opacity="0.14" stroke-width="3"/>
<rect x="711.0" y="1861.0" width="57.0" height="48.0" fill="#ffccaa"/>
<rect x="712.5" y="1862.5" width="54.0" height="45.0" fill="none" stroke="#808080" stroke-opacity="0.14" stroke-width="3"/>
<rect x="771.0" y="1810.0" width="57.0" height="48.0" fill="#cccccc"/>
<rect x="772.5" y="1811.5" width="54.0" height="45.0" fill="none" stroke="#808080" stroke-opacity="0.14" stroke-width="3"/>
<rect x="771.0" y="1861.0" width="57.0" height="48.0" fill="#ffe6d5"/>
<rect x="772.5" y="1862.5" width="54.0" height="45.0" fill="none" stroke="#808080" stroke-opacity="0.14" stroke-width="3"/>
<rect x="831.0" y="1810.0" width="57.0" height="48.0" fill="#e6e6e6"/>
<rect x="832.5" y="1811.5" width="54.0" height="45.0" fill="none" stroke="#808080" stroke-opacity="0.14" stroke-width="3"/>
<rect x="831.0" y="1861.0" width="57.0" height="48.0" fill="#28170b"/>
<rect x="832.5" y="1862.5" width="54.0" height="45.0" fill="none" stroke="#808080" stroke-opacity="0.14" stroke-width="3"/>
<rect x="891.0" y="1810.0" width="57.0" height="48.0" fill="#ececec"/>
<rect x="892.5" y="1811.5" width="54.0" height="45.0" fill="none" stroke="#808080" stroke-opacity="0.14" stroke-width="3"/>
<rect x="891.0" y="1861.0" width="57.0" height="48.0" fill="#502d16"/>
<rect x="892.5" y="1862.5" width="54.0" height="45.0" fill="none" stroke="#808080" stroke-opacity="0.14" stroke-width="3"/>
<rect x="951.0" y="1810.0" width="57.0" height="48.0" fill="#f2f2f2"/>
<rect x="952.5" y="1811.5" width="54.0" height="45.0" fill="none" stroke="#808080" stroke-opacity="0.14" stroke-width="3"/>
<rect x="951.0" y="1861.0" width="57.0" height="48.0" fill="#784421"/>
<rect x="952.5" y="1862.5" width="54.0" height="45.0" fill="none" stroke="#808080" stroke-opacity="0.14" stroke-width="3"/>
<rect x="1011.0" y="1810.0" width="57.0" height="48.0" fill="#f9f9f9"/>
<rect x="1012.5" y="1811.5" width="54.0" height="45.0" fill="none" stroke="#808080" stroke-opacity="0.14" stroke-width="3"/>
<rect x="1011.0" y="1861.0" width="57.0" height="48.0" fill="#a05a2c"/>
<rect x="1012.5" y="1862.5" width="54.0" height="45.0" fill="none" stroke="#808080" stroke-opacity="0.14" stroke-width="3"/>
<rect x="1071.0" y="1810.0" width="57.0" height="48.0" fill="#800000"/>
<rect x="1072.5" y="1811.5" width="54.0" height="45.0" fill="none" stroke="#808080" stroke-opacity="0.14" stroke-width="3"/>
<rect x="1071.0" y="1861.0" width="57.0" height="48.0" fill="#c87137"/>
<rect x="1072.5" y="1862.5" width="54.0" height="45.0" fill="none" stroke="#808080" stroke-opacity="0.14" stroke-width="3"/>
<rect x="1131.0" y="1810.0" width="57.0" height="48.0" fill="#ff0000"/>
<rect x="1132.5" y="1811.5" width="54.0" height="45.0" fill="none" stroke="#808080" stroke-opacity="0.14" stroke-width="3"/>
<rect x="1131.0" y="1861.0" width="57.0" height="48.0" fill="#d38d5f"/>
<rect x="1132.5" y="1862.5" width="54.0" height="45.0" fill="none" stroke="#808080" stroke-opacity="0.14" stroke-width="3"/>
<rect x="1191.0" y="1810.0" width="57.0" height="48.0" fill="#808000"/>
<rect x="1192.5" y="1811.5" width="54.0" height="45.0" fill="none" stroke="#808080" stroke-opacity="0.14" stroke-width="3"/>
<rect x="1191.0" y="1861.0" width="57.0" height="48.0" fill="#deaa87"/>
<rect x="1192.5" y="1862.5" width="54.0" height="45.0" fill="none" stroke="#808080" stroke-opacity="0.14" stroke-width="3"/>
<rect x="1251.0" y="1810.0" width="57.0" height="48.0" fill="#ffff00"/>
<rect x="1252.5" y="1811.5" width="54.0" height="45.0" fill="none" stroke="#808080" stroke-opacity="0.14" stroke-width="3"/>
<rect x="1251.0" y="1861.0" width="57.0" height="48.0" fill="#e9c6af"/>
<rect x="1252.5" y="1862.5" width="54.0" height="45.0" fill="none" stroke="#808080" stroke-opacity="0.14" stroke-width="3"/>
<rect x="1311.0" y="1810.0" width="57.0" height="48.0" fill="#008000"/>
<rect x="1312.5" y="1811.5" width="54.0" height="45.0" fill="none" stroke="#808080" stroke-opacity="0.14" stroke-width="3"/>
<rect x="1311.0" y="1861.0" width="57.0" height="48.0" fill="#f4e3d7"/>
<rect x="1312.5" y="1862.5" width="54.0" height="45.0" fill="none" stroke="#808080" stroke-opacity="0.14" stroke-width="3"/>
<rect x="1371.0" y="1810.0" width="57.0" height="48.0" fill="#00ff00"/>
<rect x="1372.5" y="1811.5" width="54.0" height="45.0" fill="none" stroke="#808080" stroke-opacity="0.14" stroke-width="3"/>
<rect x="1371.0" y="1861.0" width="57.0" height="48.0" fill="#241f1c"/>
<rect x="1372.5" y="1862.5" width="54.0" height="45.0" fill="none" stroke="#808080" stroke-opacity="0.14" stroke-width="3"/>
<rect x="1431.0" y="1810.0" width="57.0" height="48.0" fill="#008080"/>
<rect x="1432.5" y="1811.5" width="54.0" height="45.0" fill="none" stroke="#808080" stroke-opacity="0.14" stroke-width="3"/>
<rect x="1431.0" y="1861.0" width="57.0" height="48.0" fill="#483e37"/>
<rect x="1432.5" y="1862.5" width="54.0" height="45.0" fill="none" stroke="#808080" stroke-opacity="0.14" stroke-width="3"/>
<rect x="1491.0" y="1810.0" width="57.0" height="48.0" fill="#00ffff"/>
<rect x="1492.5" y="1811.5" width="54.0" height="45.0" fill="none" stroke="#808080" stroke-opacity="0.14" stroke-width="3"/>
<rect x="1491.0" y="1861.0" width="57.0" height="48.0" fill="#6c5d53"/>
<rect x="1492.5" y="1862.5" width="54.0" height="45.0" fill="none" stroke="#808080" stroke-opacity="0.14" stroke-width="3"/>
<rect x="1551.0" y="1810.0" width="57.0" height="48.0" fill="#000080"/>
<rect x="1552.5" y="1811.5" width="54.0" height="45.0" fill="none" stroke="#808080" stroke-opacity="0.14" stroke-width="3"/>
<rect x="1551.0" y="1861.0" width="57.0" height="48.0" fill="#917c6f"/>
<rect x="1552.5" y="1862.5" width="54.0" height="45.0" fill="none" stroke="#808080" stroke-opacity="0.14" stroke-width="3"/>
<rect x="1611.0" y="1810.0" width="57.0" height="48.0" fill="#0000ff"/>
<rect x="1612.5" y="1811.5" width="54.0" height="45.0" fill="none" stroke="#808080" stroke-opacity="0.14" stroke-width="3"/>
<rect x="1611.0" y="1861.0" width="57.0" height="48.0" fill="#ac9d93"/>
<rect x="1612.5" y="1862.5" width="54.0" height="45.0" fill="none" stroke="#808080" stroke-opacity="0.14" stroke-width="3"/>
<rect x="1671.0" y="1810.0" width="57.0" height="48.0" fill="#800080"/>
<rect x="1672.5" y="1811.5" width="54.0" height="45.0" fill="none" stroke="#808080" stroke-opacity="0.14" stroke-width="3"/>
<rect x="1671.0" y="1861.0" width="57.0" height="48.0" fill="#c8beb7"/>
<rect x="1672.5" y="1862.5" width="54.0" height="45.0" fill="none" stroke="#808080" stroke-opacity="0.14" stroke-width="3"/>
<rect x="1731.0" y="1810.0" width="57.0" height="48.0" fill="#ff00ff"/>
<rect x="1732.5" y="1811.5" width="54.0" height="45.0" fill="none" stroke="#808080" stroke-opacity="0.14" stroke-width="3"/>
<rect x="1731.0" y="1861.0" width="57.0" height="48.0" fill="#e3dedb"/>
<rect x="1732.5" y="1862.5" width="54.0" height="45.0" fill="none" stroke="#808080" stroke-opacity="0.14" stroke-width="3"/>
<rect x="1791.0" y="1810.0" width="57.0" height="48.0" fill="#2b0000"/>
<rect x="1792.5" y="1811.5" width="54.0" height="45.0" fill="none" stroke="#808080" stroke-opacity="0.14" stroke-width="3"/>
<rect x="1791.0" y="1861.0" width="57.0" height="48.0" fill="#2b2200"/>
<rect x="1792.5" y="1862.5" width="54.0" height="45.0" fill="none" stroke="#808080" stroke-opacity="0.14" stroke-width="3"/>
<rect x="1851.0" y="1810.0" width="57.0" height="48.0" fill="#550000"/>
<rect x="1852.5" y="1811.5" width="54.0" height="45.0" fill="none" stroke="#808080" stroke-opacity="0.14" stroke-width="3"/>
<rect x="1851.0" y="1861.0" width="57.0" height="48.0" fill="#554400"/>
<rect x="1852.5" y="1862.5" width="54.0" height="45.0" fill="none" stroke="#808080" stroke-opacity="0.14" stroke-width="3"/>
<rect x="1911.0" y="1810.0" width="57.0" height="48.0" fill="#800000"/>
<rect x="1912.5" y="1811.5" width="54.0" height="45.0" fill="none" stroke="#808080" stroke-opacity="0.14" stroke-width="3"/>
<rect x="1911.0" y="1861.0" width="57.0" height="48.0" fill="#806600"/>
<rect x="1912.5" y="1862.5" width="54.0" height="45.0" fill="none" stroke="#808080" stroke-opacity="0.14" stroke-width="3"/>
<rect x="1971.0" y="1810.0" width="57.0" height="48.0" fill="#aa0000"/>
<rect x="1972.5" y="1811.5" width="54.0" height="45.0" fill="none" stroke="#808080" stroke-opacity="0.14" stroke-width="3"/>
<rect x="1971.0" y="1861.0" width="57.0" height="48.0" fill="#aa8800"/>
<rect x="1972.5" y="1862.5" width="54.0" height="45.0" fill="none" stroke="#808080" stroke-opacity="0.14" stroke-width="3"/>
<rect x="2031.0" y="1810.0" width="57.0" height="48.0" fill="#d40000"/>
<rect x="2032.5" y="1811.5" width="54.0" height="45.0" fill="none" stroke="#808080" stroke-opacity="0.14" stroke-width="3"/>
<rect x="2031.0" y="1861.0" width="57.0" height="48.0" fill="#d4aa00"/>
<rect x="2032.5" y="1862.5" width="54.0" height="45.0" fill="none" stroke="#808080" stroke-opacity="0.14" stroke-width="3"/>
<rect x="2091.0" y="1810.0" width="57.0" height="48.0" fill="#ff0000"/>
<rect x="2092.5" y="1811.5" width="54.0" height="45.0" fill="none" stroke="#808080" stroke-opacity="0.14" stroke-width="3"/>
<rect x="2091.0" y="1861.0" width="57.0" height="48.0" fill="#ffcc00"/>
<rect x="2092.5" y="1862.5" width="54.0" height="45.0" fill="none" stroke="#808080" stroke-opacity="0.14" stroke-width="3"/>
<rect x="2151.0" y="1810.0" width="57.0" height="48.0" fill="#ff2a2a"/>
<rect x="2152.5" y="1811.5" width="54.0" height="45.0" fill="none" stroke="#808080" stroke-opacity="0.14" stroke-width="3"/>
<rect x="2151.0" y="1861.0" width="57.0" height="48.0" fill="#ffd42a"/>
<rect x="2152.5" y="1862.5" width="54.0" height="45.0" fill="none" stroke="#808080" stroke-opacity="0.14" stroke-width="3"/>
<rect x="2211.0" y="1810.0" width="57.0" height="48.0" fill="#ff5555"/>
<rect x="2212.5" y="1811.5" width="54.0" height="45.0" fill="none" stroke="#808080" stroke-opacity="0.14" stroke-width="3"/>
<rect x="2211.0" y="1861.0" width="57.0" height="48.0" fill="#ffdd55"/>
<rect x="2212.5" y="1862.5" width="54.0" height="45.0" fill="none" stroke="#808080" stroke-opacity="0.14" stroke-width="3"/>
<rect x="2271.0" y="1810.0" width="57.0" height="48.0" fill="#ff8080"/>
<rect x="2272.5" y="1811.5" width="54.0" height="45.0" fill="none" stroke="#808080" stroke-opacity="0.14" stroke-width="3"/>
<rect x="2271.0" y="1861.0" width="57.0" height="48.0" fill="#ffe680"/>
<rect x="2272.5" y="1862.5" width="54.0" height="45.0" fill="none" stroke="#808080" stroke-opacity="0.14" stroke-width="3"/>
<rect x="2331.0" y="1810.0" width="57.0" height="48.0" fill="#ffaaaa"/>
<rect x="2332.5" y="1811.5" width="54.0" height="45.0" fill="none" stroke="#808080" stroke-opacity="0.14" stroke-width="3"/>
<rect x="2331.0" y="1861.0" width="57.0" height="48.0" fill="#ffeeaa"/>
<rect x="2332.5" y="1862.5" width="54.0" height="45.0" fill="none" stroke="#808080" stroke-opacity="0.14" stroke-width="3"/>
<rect x="2391.0" y="1810.0" width="57.0" height="48.0" fill="#ffd5d5"/>
<rect x="2392.5" y="1811.5" width="54.0" height="45.0" fill="none" stroke="#808080" stroke-opacity="0.14" stroke-width="3"/>
<rect x="2391.0" y="1861.0" width="57.0" height="48.0" fill="#fff6d5"/>
<rect x="2392.5" y="1862.5" width="54.0" height="45.0" fill="none" stroke="#808080" stroke-opacity="0.14" stroke-width="3"/>
<rect x="2451.0" y="1810.0" width="57.0" height="48.0" fill="#280b0b"/>
<rect x="2452.5" y="1811.5" width="54.0" height="45.0" fill="none" stroke="#808080" stroke-opacity="0.14" stroke-width="3"/>
<rect x="2451.0" y="1861.0" width="57.0" height="48.0" fill="#28220b"/>
<rect x="2452.5" y="1862.5" width="54.0" height="45.0" fill="none" stroke="#808080" stroke-opacity="0.14" stroke-width="3"/>
<rect x="2511.0" y="1810.0" width="57.0" height="48.0" fill="#501616"/>
<rect x="2512.5" y="1811.5" width="54.0" height="45.0" fill="none" stroke="#808080" stroke-opacity="0.14" stroke-width="3"/>
<rect x="2511.0" y="1861.0" width="57.0" height="48.0" fill="#504416"/>
<rect x="2512.5" y="1862.5" width="54.0" height="45.0" fill="none" stroke="#808080" stroke-opacity="0.14" stroke-width="3"/>
<rect x="2571.0" y="1810.0" width="57.0" height="48.0" fill="#782121"/>
<rect x="2572.5" y="1811.5" width="54.0" height="45.0" fill="none" stroke="#808080" stroke-opacity="0.14" stroke-width="3"/>
<rect x="2571.0" y="1861.0" width="57.0" height="48.0" fill="#786721"/>
<rect x="2572.5" y="1862.5" width="54.0" height="45.0" fill="none" stroke="#808080" stroke-opacity="0.14" stroke-width="3"/>
<rect x="2631.0" y="1810.0" width="57.0" height="48.0" fill="#a02c2c"/>
<rect x="2632.5" y="1811.5" width="54.0" height="45.0" fill="none" stroke="#808080" stroke-opacity="0.14" stroke-width="3"/>
<rect x="2631.0" y="1861.0" width="57.0" height="48.0" fill="#a0892c"/>
<rect x="2632.5" y="1862.5" width="54.0" height="45.0" fill="none" stroke="#808080" stroke-opacity="0.14" stroke-width="3"/>
<rect x="2691.0" y="1810.0" width="57.0" height="48.0" fill="#c83737"/>
<rect x="2692.5" y="1811.5" width="54.0" height="45.0" fill="none" stroke="#808080" stroke-opacity="0.14" stroke-width="3"/>
<rect x="2691.0" y="1861.0" width="57.0" height="48.0" fill="#c8ab37"/>
<rect x="2692.5" y="1862.5" width="54.0" height="45.0" fill="none" stroke="#808080" stroke-opacity="0.14" stroke-width="3"/>
<rect x="2751.0" y="1810.0" width="57.0" height="48.0" fill="#d35f5f"/>
<rect x="2752.5" y="1811.5" width="54.0" height="45.0" fill="none" stroke="#808080" stroke-opacity="0.14" stroke-width="3"/>
<rect x="2751.0" y="1861.0" width="57.0" height="48.0" fill="#d3bc5f"/>
<rect x="2752.5" y="1862.5" width="54.0" height="45.0" fill="none" stroke="#808080" stroke-opacity="0.14" stroke-width="3"/>
<rect x="2811.0" y="1810.0" width="57.0" height="48.0" fill="#de8787"/>
<rect x="2812.5" y="1811.5" width="54.0" height="45.0" fill="none" stroke="#808080" stroke-opacity="0.14" stroke-width="3"/>
<rect x="2811.0" y="1861.0" width="57.0" height="48.0" fill="#decd87"/>
<rect x="2812.5" y="1862.5" width="54.0" height="45.0" fill="none" stroke="#808080" stroke-opacity="0.14" stroke-width="3"/>
<rect x="2871.0" y="1810.0" width="57.0" height="48.0" fill="#e9afaf"/>
<rect x="2872.5" y="1811.5" width="54.0" height="45.0" fill="none" stroke="#808080" stroke-opacity="0.14" stroke-width="3"/>
<rect x="2871.0" y="1861.0" width="57.0" height="48.0" fill="#e9ddaf"/>
<rect x="2872.5" y="1862.5" width="54.0" height="45.0" fill="none" stroke="#808080" stroke-opacity="0.14" stroke-width="3"/>
<rect x="2931.0" y="1810.0" width="57.0" height="48.0" fill="#f4d7d7"/>
<rect x="2932.5" y="1811.5" width="54.0" height="45.0" fill="none" stroke="#808080" stroke-opacity="0.14" stroke-width="3"/>
<rect x="2931.0" y="1861.0" width="57.0" height="48.0" fill="#f4eed7"/>
<rect x="2932.5" y="1862.5" width="54.0" height="45.0" fill="none" stroke="#808080" stroke-opacity="0.14" stroke-width="3"/>
<rect x="2991.0" y="1810.0" width="57.0" height="48.0" fill="#241c1c"/>
<rect x="2992.5" y="1811.5" width="54.0" height="45.0" fill="none" stroke="#808080" stroke-opacity="0.14" stroke-width="3"/>
<rect x="2991.0" y="1861.0" width="57.0" height="48.0" fill="#24221c"/>
<rect x="2992.5" y="1862.5" width="54.0" height="45.0" fill="none" stroke="#808080" stroke-opacity="0.14" stroke-width="3"/>
<rect x="3051.0" y="1810.0" width="57.0" height="48.0" fill="#483737"/>
<rect x="3052.5" y="1811.5" width="54.0" height="45.0" fill="none" stroke="#808080" stroke-opacity="0.14" stroke-width="3"/>
<rect x="3051.0" y="1861.0" width="57.0" height="48.0" fill="#484537"/>
<rect x="3052.5" y="1862.5" width="54.0" height="45.0" fill="none" stroke="#808080" stroke-opacity="0.14" stroke-width="3"/>
<rect x="3111.0" y="1810.0" width="57.0" height="48.0" fill="#6c5353"/>
<rect x="3112.5" y="1811.5" width="54.0" height="45.0" fill="none" stroke="#808080" stroke-opacity="0.14" stroke-width="3"/>
<rect x="3111.0" y="1861.0" width="57.0" height="48.0" fill="#6c6753"/>
<rect x="3112.5" y="1862.5" width="54.0" height="45.0" fill="none" stroke="#808080" stroke-opacity="0.14" stroke-width="3"/>
<rect x="3171.0" y="1810.0" width="57.0" height="48.0" fill="#916f6f"/>
<rect x="3172.5" y="1811.5" width="54.0" height="45.0" fill="none" stroke="#808080" stroke-opacity="0.14" stroke-width="3"/>
<rect x="3171.0" y="1861.0" width="57.0" height="48.0" fill="#918a6f"/>
<rect x="3172.5" y="1862.5" width="54.0" height="45.0" fill="none" stroke="#808080" stroke-opacity="0.14" stroke-width="3"/>
<rect x="3231.0" y="1810.0" width="57.0" height="48.0" fill="#ac9393"/>
<rect x="3232.5" y="1811.5" width="54.0" height="45.0" fill="none" stroke="#808080" stroke-opacity="0.14" stroke-width="3"/>
<rect x="3231.0" y="1861.0" width="57.0" height="48.0" fill="#aca793"/>
<rect x="3232.5" y="1862.5" width="54.0" height="45.0" fill="none" stroke="#808080" stroke-opacity="0.14" stroke-width="3"/>
<rect x="3291.0" y="1810.0" width="57.0" height="48.0" fill="#c8b7b7"/>
<rect x="3292.5" y="1811.5" width="54.0" height="45.0" fill="none" stroke="#808080" stroke-opacity="0.14" stroke-width="3"/>
<rect x="3291.0" y="1861.0" width="57.0" height="48.0" fill="#c8c4b7"/>
<rect x="3292.5" y="1862.5" width="54.0" height="45.0" fill="none" stroke="#808080" stroke-opacity="0.14" stroke-width="3"/>
<rect x="3351.0" y="1810.0" width="57.0" height="48.0" fill="#e3dbdb"/>
<rect x="3352.5" y="1811.5" width="54.0" height="45.0" fill="none" stroke="#808080" stroke-opacity="0.14" stroke-width="3"/>
<rect x="3351.0" y="1861.0" width="57.0" height="48.0" fill="#e3e2db"/>
<rect x="3352.5" y="1862.5" width="54.0" height="45.0" fill="none" stroke="#808080" stroke-opacity="0.14" stroke-width="3"/>
<rect x="3411.0" y="1810.0" width="57.0" height="48.0" fill="#2b1100"/>
<rect x="3412.5" y="1811.5" width="54.0" height="45.0" fill="none" stroke="#808080" stroke-opacity="0.14" stroke-width="3"/>
<rect x="3411.0" y="1861.0" width="57.0" height="48.0" fill="#222b00"/>
<rect x="3412.5" y="1862.5" width="54.0" height="45.0" fill="none" stroke="#808080" stroke-opacity="0.14" stroke-width="3"/>
<rect x="3471.0" y="1810.0" width="57.0" height="48.0" fill="#552200"/>
<rect x="3472.5" y="1811.5" width="54.0" height="45.0" fill="none" stroke="#808080" stroke-opacity="0.14" stroke-width="3"/>
<rect x="3471.0" y="1861.0" width="57.0" height="48.0" fill="#445500"/>
<rect x="3472.5" y="1862.5" width="54.0" height="45.0" fill="none" stroke="#808080" stroke-opacity="0.14" stroke-width="3"/>
<rect x="3528.0" y="1810.0" width="54.0" height="48.0" fill="#803300"/>
<rect x="3529.5" y="1811.5" width="51.0" height="45.0" fill="none" stroke="#808080" stroke-opacity="0.14" stroke-width="3"/>
<rect x="3528.0" y="1861.0" width="54.0" height="48.0" fill="#668000"/>
<rect x="3529.5" y="1862.5" width="51.0" height="45.0" fill="none" stroke="#808080" stroke-opacity="0.14" stroke-width="3"/>
<rect x="3585.0" y="1810.0" width="54.0" height="48.0" fill="#aa4400"/>
<rect x="3586.5" y="1811.5" width="51.0" height="45.0" fill="none" stroke="#808080" stroke-opacity="0.14" stroke-width="3"/>
<rect x="3585.0" y="1861.0" width="54.0" height="48.0" fill="#88aa00"/>
<rect x="3586.5" y="1862.5" width="51.0" height="45.0" fill="none" stroke="#808080" stroke-opacity="0.14" stroke-width="3"/>
<path d="M3655.5 1868 l16.5 -15 l16.5 15" fill="none" stroke="#808080" stroke-width="6.5"/>
<path d="M3724.5 1852.5 l16.5 14 l16.5 -14" fill="none" stroke="#ececec" stroke-width="6.5"/>
<path d="M3786 1855 h42 M3786 1869.7 h42 M3786 1885 h42" stroke="#ececec" stroke-width="6"/>
<rect x="523.5" y="1916.0" width="214.5" height="104.0" fill="#1c1c1c" rx="13"/>
<rect x="526.5" y="1919.0" width="208.5" height="98.0" fill="#323232" rx="10"/>
<path d="M634.5 1919 V2017 M686.3 1919 V2017" stroke="#272727" stroke-width="3"/>
<path d="M643.0 1969.5 h35.5" stroke="#5c5c5c" stroke-width="5.0"/>
<path d="M694.3 1969.5 h35.5 M712.05 1951.5 v36" stroke="#5c5c5c" stroke-width="5.0"/>
<rect x="783.2" y="1940.0" width="8.2" height="49.5" fill="#ffffff"/>
<ellipse cx="978" cy="1969" rx="18" ry="12.3" fill="none" stroke="#858585" stroke-width="6.5"/><circle cx="978" cy="1968.5" r="7.3" fill="#858585"/>
<path d="M978 1945.5 v9 M962 1952.5 l4.5 5.5 M994 1952.5 l-4.5 5.5" stroke="#858585" stroke-width="5.5" stroke-linecap="round"/>
<rect x="1070.7" y="1964" width="30.2" height="23" fill="#858585"/><path d="M1091.5 1964 v-7 a8.5 8.5 0 0 1 17 0 v4" fill="none" stroke="#858585" stroke-width="6"/>
<rect x="1143.0" y="1934.0" width="3.0" height="63.0" fill="#2c2c2c"/>
<path d="M2724 1947 v37 l-18 -18.5 z" fill="#8f8f8f"/>
<linearGradient id="bg2769_1916" x1="0" y1="0" x2="0" y2="1"><stop offset="0" stop-color="#383838"/><stop offset="1" stop-color="#323232"/></linearGradient>
<rect x="2769.5" y="1916.0" width="107.0" height="104.0" fill="#161616" rx="13"/>
<rect x="2772.5" y="1919.0" width="101.0" height="97.0" fill="url(#bg2769_1916)" rx="10"/>
<path d="M2804.5 1958 H2841 L2822.75 1975.5 Z" fill="#8f8f8f"/>
<path d="M2804.5 1957 H2841" stroke="#111" stroke-width="2"/>
<path d="M2922 1947 v37 l18 -18.5 z" fill="#8f8f8f"/>
<rect x="2985.0" y="1934.0" width="3.0" height="63.0" fill="#2c2c2c"/>
<rect x="3252.5" y="1916.0" width="232.0" height="104.0" fill="#1c1c1c" rx="13"/>
<rect x="3255.5" y="1919.0" width="226.0" height="98.0" fill="#2d2d2d" rx="10"/>
<path d="M3381 1919 V2017 M3433.5 1919 V2017" stroke="#272727" stroke-width="3"/>
<path d="M3389.5 1969.5 h35.5" stroke="#eeeeec" stroke-width="5.0"/>
<path d="M3441.5 1969.5 h35.5 M3459.25 1951.5 v36" stroke="#eeeeec" stroke-width="5.0"/>
<rect x="3558.5" y="1916.0" width="251.5" height="104.0" fill="#1c1c1c" rx="13"/>
<rect x="3561.5" y="1919.0" width="245.5" height="98.0" fill="#2d2d2d" rx="10"/>
<path d="M3705 1919 V2017 M3758 1919 V2017" stroke="#272727" stroke-width="3"/>
<path d="M3713.5 1969.5 h35.5" stroke="#eeeeec" stroke-width="5.0"/>
<path d="M3766 1969.5 h35.5 M3783.75 1951.5 v36" stroke="#eeeeec" stroke-width="5.0"/>
</svg>
<span class="t" id="t0" style="left:65.6px;top:19.8px;font-size:33.80px;line-height:33.80px;color:#ffffff;transform-origin:0 0;transform:scaleX(1.0366);">*svg.breadboard.ModuleL293D_42d90ef1f73875586e92241415996c10_2_breadboard.svg - Inkscape</span>
<span class="t" id="t1" style="left:24.7px;top:88.6px;font-size:35.47px;line-height:35.47px;color:#eeeeec;transform-origin:0 0;transform:scaleX(0.9496);">File</span>
<span class="t" id="t2" style="left:126.6px;top:88.6px;font-size:35.47px;line-height:35.47px;color:#eeeeec;transform-origin:0 0;transform:scaleX(0.9779);">Edit</span>
<span class="t" id="t3" style="left:234.1px;top:88.6px;font-size:35.47px;line-height:35.47px;color:#eeeeec;transform-origin:0 0;transform:scaleX(0.9741);">View</span>
<span class="t" id="t4" style="left:358.1px;top:88.6px;font-size:35.47px;line-height:35.47px;color:#eeeeec;transform-origin:0 0;transform:scaleX(0.9610);">Layer</span>
<span class="t" id="t5" style="left:489.1px;top:88.6px;font-size:35.47px;line-height:35.47px;color:#eeeeec;transform-origin:0 0;transform:scaleX(1.0318);">Object</span>
<span class="t" id="t6" style="left:643.2px;top:88.6px;font-size:35.47px;line-height:35.47px;color:#eeeeec;transform-origin:0 0;transform:scaleX(0.9288);">Path</span>
<span class="t" id="t7" style="left:758.6px;top:88.6px;font-size:35.47px;line-height:35.47px;color:#eeeeec;transform-origin:0 0;transform:scaleX(0.9802);">Text</span>
<span class="t" id="t8" style="left:871.1px;top:88.6px;font-size:35.47px;line-height:35.47px;color:#eeeeec;transform-origin:0 0;transform:scaleX(0.9608);">Filters</span>
<span class="t" id="t9" style="left:1012.7px;top:88.6px;font-size:35.47px;line-height:35.47px;color:#eeeeec;transform-origin:0 0;transform:scaleX(0.9584);">Extensions</span>
<span class="t" id="t10" style="left:1227.6px;top:88.6px;font-size:35.47px;line-height:35.47px;color:#eeeeec;transform-origin:0 0;transform:scaleX(1.0387);">Help</span>
<span class="t" id="t11" style="left:1541.7px;top:187.2px;font-size:35.20px;line-height:35.20px;color:#8b8b8a;transform-origin:0 0;transform:scaleX(0.8800);">X:</span>
<span class="t" id="t12" style="left:1600.7px;top:187.2px;font-size:35.20px;line-height:35.20px;color:#8b8b8a;transform-origin:0 0;transform:scaleX(0.9497);">-0.869</span>
<span class="t" id="t13" style="left:1898.7px;top:187.2px;font-size:35.20px;line-height:35.20px;color:#8b8b8a;transform-origin:0 0;transform:scaleX(0.9344);">Y:</span>
<span class="t" id="t14" style="left:1957.2px;top:187.2px;font-size:35.20px;line-height:35.20px;color:#8b8b8a;transform-origin:0 0;transform:scaleX(0.9597);">-0.036</span>
<span class="t" id="t15" style="left:2256.7px;top:187.2px;font-size:35.20px;line-height:35.20px;color:#8b8b8a;transform-origin:0 0;transform:scaleX(0.9268);">W:</span>
<span class="t" id="t16" style="left:2326.2px;top:187.2px;font-size:35.20px;line-height:35.20px;color:#8b8b8a;transform-origin:0 0;transform:scaleX(0.8990);">38.801</span>
<span class="t" id="t17" style="left:2748.6px;top:187.2px;font-size:35.20px;line-height:35.20px;color:#8b8b8a;transform-origin:0 0;transform:scaleX(0.9736);">H:</span>
<span class="t" id="t18" style="left:2810.7px;top:187.2px;font-size:35.20px;line-height:35.20px;color:#8b8b8a;transform-origin:0 0;transform:scaleX(0.9316);">34.870</span>
<span class="t" id="t19" style="left:3148.1px;top:187.0px;font-size:35.47px;line-height:35.47px;color:#eeeeec;transform-origin:0 0;transform:scaleX(0.9946);">mm</span>
<span class="t" id="t20" style="left:252.8px;top:285.2px;font-size:29.33px;line-height:29.33px;color:#eeeeec;transform-origin:0 0;transform:scaleX(0.9829);">-50</span>
<span class="t" id="t21" style="left:447.8px;top:285.2px;font-size:29.33px;line-height:29.33px;color:#eeeeec;transform-origin:0 0;transform:scaleX(0.9829);">-25</span>
<span class="t" id="t22" style="left:639.9px;top:285.2px;font-size:29.33px;line-height:29.33px;color:#eeeeec;transform-origin:0 0;transform:scaleX(0.8501);">0</span>
<span class="t" id="t23" style="left:834.9px;top:285.2px;font-size:29.33px;line-height:29.33px;color:#eeeeec;transform-origin:0 0;transform:scaleX(0.8725);">25</span>
<span class="t" id="t24" style="left:1029.9px;top:285.2px;font-size:29.33px;line-height:29.33px;color:#eeeeec;transform-origin:0 0;transform:scaleX(0.8725);">50</span>
<span class="t" id="t25" style="left:1221.9px;top:285.2px;font-size:29.33px;line-height:29.33px;color:#eeeeec;transform-origin:0 0;transform:scaleX(0.8725);">75</span>
<span class="t" id="t26" style="left:1416.9px;top:285.2px;font-size:29.33px;line-height:29.33px;color:#eeeeec;transform-origin:0 0;transform:scaleX(0.8800);">100</span>
<span class="t" id="t27" style="left:1611.9px;top:285.2px;font-size:29.33px;line-height:29.33px;color:#eeeeec;transform-origin:0 0;transform:scaleX(0.8800);">125</span>
<span class="t" id="t28" style="left:1803.9px;top:285.2px;font-size:29.33px;line-height:29.33px;color:#eeeeec;transform-origin:0 0;transform:scaleX(0.8800);">150</span>
<span class="t" id="t29" style="left:1998.9px;top:285.2px;font-size:29.33px;line-height:29.33px;color:#eeeeec;transform-origin:0 0;transform:scaleX(0.8800);">175</span>
<span class="t" id="t30" style="left:2193.9px;top:285.2px;font-size:29.33px;line-height:29.33px;color:#eeeeec;transform-origin:0 0;transform:scaleX(0.8800);">200</span>
<span class="t" id="t31" style="left:129.3px;top:444.5px;font-size:29.33px;line-height:29.33px;color:#eeeeec;transform-origin:0.7px 24.8px;transform:rotate(-90deg) scaleX(0.9481);">0</span>
<span class="t" id="t32" style="left:129.3px;top:658.2px;font-size:29.33px;line-height:29.33px;color:#eeeeec;transform-origin:0.7px 24.8px;transform:rotate(-90deg) scaleX(0.9032);">25</span>
<span class="t" id="t33" style="left:129.3px;top:853.2px;font-size:29.33px;line-height:29.33px;color:#eeeeec;transform-origin:0.7px 24.8px;transform:rotate(-90deg) scaleX(0.9032);">50</span>
<span class="t" id="t34" style="left:129.3px;top:1045.2px;font-size:29.33px;line-height:29.33px;color:#eeeeec;transform-origin:0.7px 24.8px;transform:rotate(-90deg) scaleX(0.9032);">75</span>
<span class="t" id="t35" style="left:129.3px;top:1249.2px;font-size:29.33px;line-height:29.33px;color:#eeeeec;transform-origin:0.7px 24.8px;transform:rotate(-90deg) scaleX(0.9393);">100</span>
<span class="t" id="t36" style="left:129.3px;top:1444.2px;font-size:29.33px;line-height:29.33px;color:#eeeeec;transform-origin:0.7px 24.8px;transform:rotate(-90deg) scaleX(0.9393);">125</span>
<span class="t" id="t37" style="left:129.3px;top:1636.2px;font-size:29.33px;line-height:29.33px;color:#eeeeec;transform-origin:0.7px 24.8px;transform:rotate(-90deg) scaleX(0.9393);">150</span>
<span class="t" id="t38" style="left:14.2px;top:1369.3px;font-size:46.09px;line-height:46.09px;color:#ececec;font-weight:bold;transform-origin:0 0;transform:scaleX(1.1209);-webkit-text-stroke:2.2px #ececec;">A</span>
<span class="t" id="t39" style="left:2388.6px;top:424.0px;font-size:35.75px;line-height:35.75px;color:#eeeeec;transform-origin:0 0;transform:scaleX(0.9622);">Display</span>
<span class="t" id="t40" style="left:2568.1px;top:424.0px;font-size:35.75px;line-height:35.75px;color:#eeeeec;transform-origin:0 0;transform:scaleX(0.9515);">Guides</span>
<span class="t" id="t41" style="left:2745.2px;top:424.0px;font-size:35.75px;line-height:35.75px;color:#eeeeec;transform-origin:0 0;transform:scaleX(0.9457);">Grids</span>
<span class="t" id="t42" style="left:2901.1px;top:424.0px;font-size:35.75px;line-height:35.75px;color:#eeeeec;transform-origin:0 0;transform:scaleX(1.0041);">Color</span>
<span class="t" id="t43" style="left:3053.1px;top:424.0px;font-size:35.75px;line-height:35.75px;color:#eeeeec;transform-origin:0 0;transform:scaleX(1.0194);">Scripting</span>
<span class="t" id="t44" style="left:3261.6px;top:424.0px;font-size:35.75px;line-height:35.75px;color:#eeeeec;transform-origin:0 0;">Metadata</span>
<span class="t" id="t45" style="left:3478.1px;top:424.0px;font-size:35.75px;line-height:35.75px;color:#eeeeec;transform-origin:0 0;transform:scaleX(0.9517);">License</span>
<span class="t" id="t46" style="left:2370.0px;top:512.1px;font-size:37.43px;line-height:37.43px;color:#eeeeec;font-weight:bold;transform-origin:0 0;transform:scaleX(1.0467);">Front page</span>
<span class="t" id="t47" style="left:2371.1px;top:601.4px;font-size:35.75px;line-height:35.75px;color:#eeeeec;transform-origin:0 0;transform:scaleX(0.9605);">Format:</span>
<span class="t" id="t48" style="left:2526.1px;top:601.4px;font-size:35.75px;line-height:35.75px;color:#eeeeec;transform-origin:0 0;transform:scaleX(0.9806);">Custom</span>
<span class="t" id="t49" style="left:2833.1px;top:601.4px;font-size:35.75px;line-height:35.75px;color:#eeeeec;transform-origin:0 0;transform:scaleX(0.9806);">in</span>
<span class="t" id="t50" style="left:2370.1px;top:714.5px;font-size:36.87px;line-height:36.87px;color:#eeeeec;transform-origin:0 0;transform:scaleX(0.9940);">Width:</span>
<span class="t" id="t51" style="left:2519.7px;top:715.4px;font-size:35.75px;line-height:35.75px;color:#eeeeec;transform-origin:0 0;transform:scaleX(0.8806);">1.535</span>
<span class="t" id="t52" style="left:2370.1px;top:828.1px;font-size:36.87px;line-height:36.87px;color:#eeeeec;transform-origin:0 0;transform:scaleX(0.9961);">Height:</span>
<span class="t" id="t53" style="left:2519.7px;top:829.0px;font-size:35.75px;line-height:35.75px;color:#eeeeec;transform-origin:0 0;transform:scaleX(0.8806);">1.339</span>
<span class="t" id="t54" style="left:2370.1px;top:930.4px;font-size:35.75px;line-height:35.75px;color:#eeeeec;transform-origin:0 0;transform:scaleX(1.0215);">Orientation:</span>
<span class="t" id="t55" style="left:2370.1px;top:1033.2px;font-size:35.75px;line-height:35.75px;color:#eeeeec;transform-origin:0 0;transform:scaleX(0.9707);">Resize to content:</span>
<span class="t" id="t56" style="left:2370.2px;top:1164.3px;font-size:36.03px;line-height:36.03px;color:#eeeeec;transform-origin:0 0;transform:scaleX(0.8920);">Scale:</span>
<span class="t" id="t57" style="left:2516.7px;top:1164.5px;font-size:35.75px;line-height:35.75px;color:#eeeeec;transform-origin:0 0;transform:scaleX(0.9173);">0.010417</span>
<span class="t" id="t58" style="left:2496.8px;top:1271.5px;font-size:29.89px;line-height:29.89px;color:#eeeeec;transform-origin:0 0;transform:scaleX(0.9785);">in  per user unit</span>
<span class="t" id="t59" style="left:2417.6px;top:1356.2px;font-size:36.59px;line-height:36.59px;color:#eeeeec;transform-origin:0 0;transform:scaleX(0.9762);">Viewbox</span>
<span class="t" id="t60" style="left:3040.0px;top:512.1px;font-size:37.43px;line-height:37.43px;color:#eeeeec;font-weight:bold;transform-origin:0 0;transform:scaleX(1.0432);">Display</span>
<span class="t" id="t61" style="left:3040.6px;top:601.4px;font-size:35.75px;line-height:35.75px;color:#eeeeec;transform-origin:0 0;transform:scaleX(0.9773);">Display units:</span>
<span class="t" id="t62" style="left:3388.6px;top:601.4px;font-size:35.75px;line-height:35.75px;color:#eeeeec;transform-origin:0 0;transform:scaleX(0.9873);">px</span>
<span class="t" id="t63" style="left:3079.2px;top:1207.2px;font-size:35.75px;line-height:35.75px;color:#eeeeec;transform-origin:0 0;transform:scaleX(0.8957);">Page</span>
<span class="t" id="t64" style="left:3232.1px;top:1207.2px;font-size:35.75px;line-height:35.75px;color:#eeeeec;transform-origin:0 0;transform:scaleX(0.9858);">Border</span>
<span class="t" id="t65" style="left:3415.2px;top:1207.2px;font-size:35.75px;line-height:35.75px;color:#eeeeec;transform-origin:0 0;transform:scaleX(0.9120);">Desk</span>
<span class="t" id="t66" style="left:3111.6px;top:1293.4px;font-size:35.75px;line-height:35.75px;color:#eeeeec;transform-origin:0 0;transform:scaleX(0.9721);">Checkerboard</span>
<span class="t" id="t67" style="left:3111.6px;top:1356.0px;font-size:35.75px;line-height:35.75px;color:#eeeeec;transform-origin:0 0;transform:scaleX(0.9858);">Border</span>
<span class="t" id="t68" style="left:3147.1px;top:1419.9px;font-size:35.75px;line-height:35.75px;color:#eeeeec;transform-origin:0 0;transform:scaleX(1.0099);">Always on top</span>
<span class="t" id="t69" style="left:3147.1px;top:1482.7px;font-size:35.75px;line-height:35.75px;color:#eeeeec;transform-origin:0 0;transform:scaleX(0.9807);">Show shadow</span>
<span class="t" id="t70" style="left:3111.6px;top:1545.7px;font-size:35.75px;line-height:35.75px;color:#eeeeec;transform-origin:0 0;transform:scaleX(0.9791);">Show big page labels</span>
<span class="t" id="t71" style="left:3111.6px;top:1683.5px;font-size:35.75px;line-height:35.75px;color:#eeeeec;transform-origin:0 0;transform:scaleX(0.9699);">Use antialiasing</span>
<span class="t" id="t72" style="left:3111.6px;top:1745.9px;font-size:35.75px;line-height:35.75px;color:#eeeeec;transform-origin:0 0;transform:scaleX(0.9895);">Clip to page</span>
<span class="t" id="t73" style="left:3040.1px;top:1625.3px;font-size:37.99px;line-height:37.99px;color:#eeeeec;font-weight:bold;transform-origin:0 0;transform:scaleX(0.9887);">Render</span>
<span class="t" id="t74" style="left:54.6px;top:1924.0px;font-size:35.47px;line-height:35.47px;color:#eeeeec;transform-origin:0 0;transform:scaleX(0.9656);">Fill:</span>
<span class="t" id="t75" style="left:211.0px;top:1924.0px;font-size:35.47px;line-height:35.47px;color:#eeeeec;transform-origin:0 0;transform:scaleX(1.0952);">N/A</span>
<span class="t" id="t76" style="left:0.7px;top:1974.5px;font-size:35.47px;line-height:35.47px;color:#eeeeec;transform-origin:0 0;transform:scaleX(0.9546);">Stroke:</span>
<span class="t" id="t77" style="left:211.0px;top:1974.5px;font-size:35.47px;line-height:35.47px;color:#eeeeec;transform-origin:0 0;transform:scaleX(1.0952);">N/A</span>
<span class="t" id="t78" style="left:468.7px;top:1947.8px;font-size:35.47px;line-height:35.47px;color:#eeeeec;transform-origin:0 0;transform:scaleX(0.9151);">O:</span>
<span class="t" id="t79" style="left:544.2px;top:1947.8px;font-size:35.47px;line-height:35.47px;color:#8b8b8a;transform-origin:0 0;transform:scaleX(0.9254);">100</span>
<span class="t" id="t80" style="left:810.1px;top:1947.8px;font-size:35.47px;line-height:35.47px;color:#eeeeec;font-style:italic;transform-origin:0 0;transform:scaleX(1.0241);">[root]</span>
<span class="t" id="t81" style="left:1165.2px;top:1947.8px;font-size:35.47px;line-height:35.47px;color:#eeeeec;font-weight:bold;transform-origin:0 0;transform:scaleX(0.9454);">Hold ALT</span>
<span class="t" id="t82" style="left:1308.6px;top:1947.8px;font-size:35.47px;line-height:35.47px;color:#eeeeec;transform-origin:0 0;transform:scaleX(1.0385);"> while hovering over item to highlight, </span>
<span class="t" id="t83" style="left:1923.2px;top:1947.8px;font-size:35.47px;line-height:35.47px;color:#eeeeec;font-weight:bold;transform-origin:0 0;transform:scaleX(0.9578);">hold SHIFT</span>
<span class="t" id="t84" style="left:2100.6px;top:1947.8px;font-size:35.47px;line-height:35.47px;color:#eeeeec;transform-origin:0 0;transform:scaleX(1.0368);"> and click to hide/lock all.</span>
<span class="t" id="t85" style="left:3005.7px;top:1924.0px;font-size:35.47px;line-height:35.47px;color:#eeeeec;transform-origin:0 0;transform:scaleX(0.8734);">X:</span>
<span class="t" id="t86" style="left:3076.2px;top:1924.0px;font-size:35.47px;line-height:35.47px;color:#eeeeec;transform-origin:0 0;transform:scaleX(0.9104);">175.28</span>
<span class="t" id="t87" style="left:3005.7px;top:1974.5px;font-size:35.47px;line-height:35.47px;color:#eeeeec;transform-origin:0 0;transform:scaleX(0.9275);">Y:</span>
<span class="t" id="t88" style="left:3076.2px;top:1974.5px;font-size:35.47px;line-height:35.47px;color:#eeeeec;transform-origin:0 0;transform:scaleX(0.9104);">160.19</span>
<span class="t" id="t89" style="left:3209.7px;top:1947.8px;font-size:35.47px;line-height:35.47px;color:#eeeeec;transform-origin:0 0;transform:scaleX(0.9443);">Z:</span>
<span class="t" id="t90" style="left:3282.2px;top:1947.8px;font-size:35.47px;line-height:35.47px;color:#eeeeec;transform-origin:0 0;transform:scaleX(0.9179);">258%</span>
<span class="t" id="t91" style="left:3517.8px;top:1947.8px;font-size:35.47px;line-height:35.47px;color:#eeeeec;transform-origin:0 0;transform:scaleX(0.7549);">R:</span>
<span class="t" id="t92" style="left:3605.7px;top:1947.8px;font-size:35.47px;line-height:35.47px;color:#eeeeec;transform-origin:0 0;transform:scaleX(0.9286);">0.00°</span>
<div style="position:absolute;left:106.0px;top:453.0px;width:26.0px;height:5.7px;background:#353535"></div>
<div style="position:absolute;left:106.0px;top:1230.0px;width:26.0px;height:2.5px;background:#1e1e1e"></div>
<div style="position:absolute;left:106.0px;top:1425.0px;width:26.0px;height:2.5px;background:#1e1e1e"></div>
<div style="position:absolute;left:106.0px;top:1617.0px;width:26.0px;height:2.5px;background:#353535"></div>
</body></html>
